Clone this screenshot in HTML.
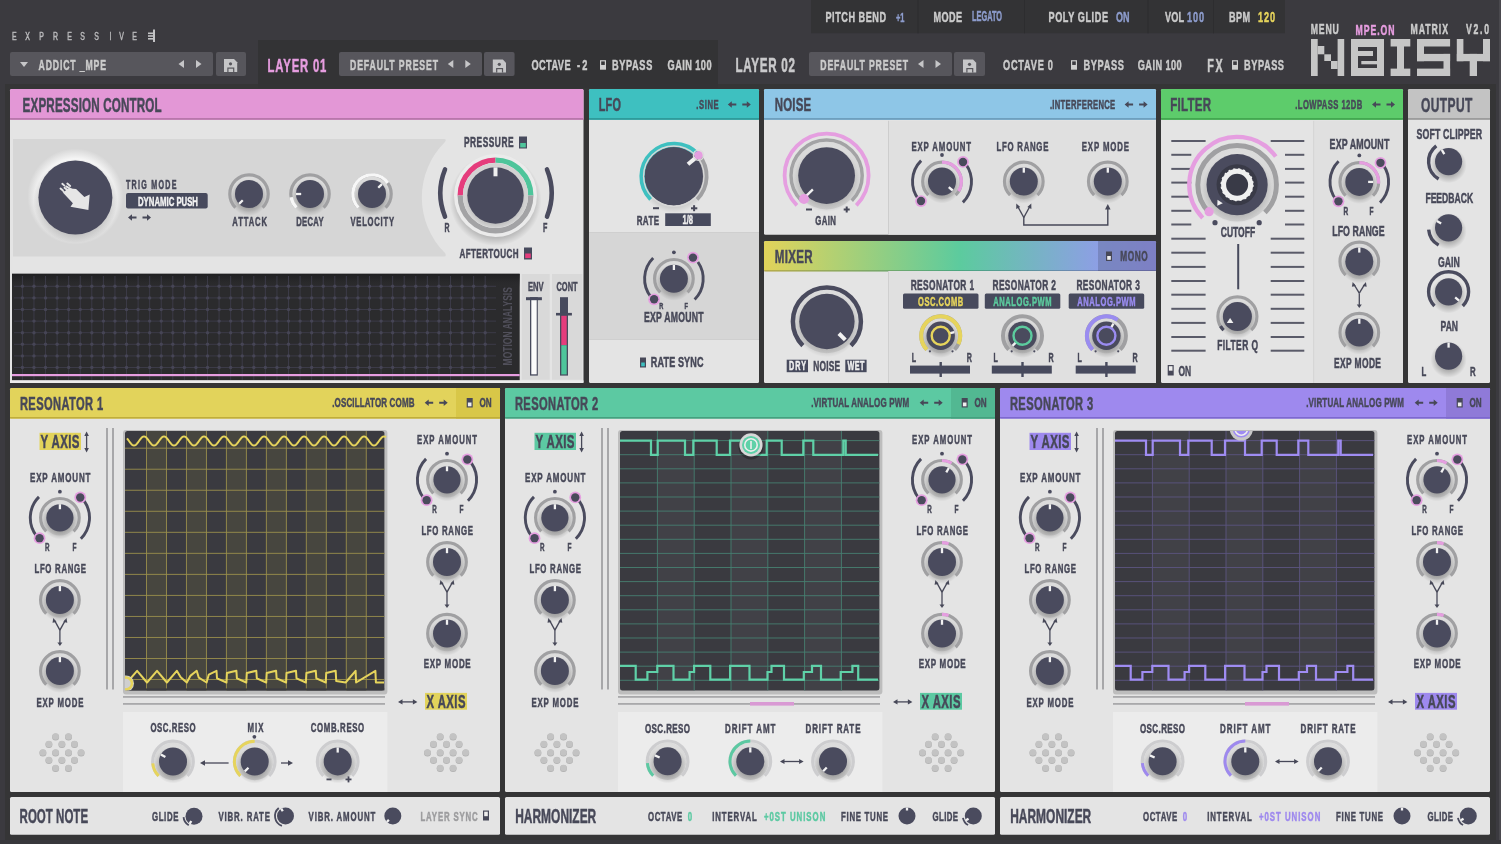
<!DOCTYPE html>
<html><head><meta charset="utf-8"><style>
html,body{margin:0;padding:0;background:#3a393e;width:1501px;height:844px;overflow:hidden}
svg{display:block;font-family:"Liberation Sans",sans-serif;will-change:transform}
</style></head><body>
<svg width="1501" height="844" viewBox="0 0 1501 844">
<defs>
<radialGradient id="ksh" cx="0.5" cy="0.5" r="0.5"><stop offset="0.55" stop-color="#000" stop-opacity="0.26"/><stop offset="1" stop-color="#000" stop-opacity="0"/></radialGradient>
<radialGradient id="halo" cx="0.5" cy="0.3" r="0.7"><stop offset="0" stop-color="#e2e2e2"/><stop offset="1" stop-color="#d2d2d2"/></radialGradient>
<radialGradient id="bigsh" cx="0.5" cy="0.5" r="0.5"><stop offset="0.75" stop-color="#000" stop-opacity="0.25"/><stop offset="1" stop-color="#000" stop-opacity="0"/></radialGradient>
<linearGradient id="mixg" x1="0" y1="0" x2="1" y2="0"><stop offset="0" stop-color="#e2d35a"/><stop offset="0.5" stop-color="#5ccb9e"/><stop offset="0.86" stop-color="#8e9ee6"/><stop offset="1" stop-color="#9a8cf0"/></linearGradient>
</defs>
<rect x="0.00" y="0.00" width="1501.00" height="844.00" rx="0" fill="#3b3a3f" />
<rect x="1499.00" y="0.00" width="2.00" height="844.00" rx="0" fill="#4a494e" />
<rect x="5.00" y="84.00" width="1491.00" height="756.00" rx="0" fill="#353536" />
<rect x="0.00" y="840.00" width="1501.00" height="4.00" rx="0" fill="#38373c" />
<text transform="translate(12.04,40.00) scale(0.6000,1)" font-size="11.59" font-weight="normal" fill="#b9b9bb" stroke="#b9b9bb" stroke-width="0.5" textLength="12.23" lengthAdjust="spacing">E</text>
<text transform="translate(25.34,40.00) scale(0.6000,1)" font-size="11.59" font-weight="normal" fill="#b9b9bb" stroke="#b9b9bb" stroke-width="0.5" textLength="12.23" lengthAdjust="spacing">X</text>
<text transform="translate(39.34,40.00) scale(0.6000,1)" font-size="11.59" font-weight="normal" fill="#b9b9bb" stroke="#b9b9bb" stroke-width="0.5" textLength="12.23" lengthAdjust="spacing">P</text>
<text transform="translate(53.03,40.00) scale(0.6000,1)" font-size="11.59" font-weight="normal" fill="#b9b9bb" stroke="#b9b9bb" stroke-width="0.5" textLength="13.24" lengthAdjust="spacing">R</text>
<text transform="translate(67.34,40.00) scale(0.6000,1)" font-size="11.59" font-weight="normal" fill="#b9b9bb" stroke="#b9b9bb" stroke-width="0.5" textLength="12.23" lengthAdjust="spacing">E</text>
<text transform="translate(80.34,40.00) scale(0.6000,1)" font-size="11.59" font-weight="normal" fill="#b9b9bb" stroke="#b9b9bb" stroke-width="0.5" textLength="12.23" lengthAdjust="spacing">S</text>
<text transform="translate(94.34,40.00) scale(0.6000,1)" font-size="11.59" font-weight="normal" fill="#b9b9bb" stroke="#b9b9bb" stroke-width="0.5" textLength="12.23" lengthAdjust="spacing">S</text>
<text transform="translate(109.46,40.00) scale(0.6000,1)" font-size="11.59" font-weight="normal" fill="#b9b9bb" stroke="#b9b9bb" stroke-width="0.5" textLength="5.11" lengthAdjust="spacing">I</text>
<text transform="translate(119.34,40.00) scale(0.6000,1)" font-size="11.59" font-weight="normal" fill="#b9b9bb" stroke="#b9b9bb" stroke-width="0.5" textLength="12.23" lengthAdjust="spacing">V</text>
<text transform="translate(132.34,40.00) scale(0.6000,1)" font-size="11.59" font-weight="normal" fill="#b9b9bb" stroke="#b9b9bb" stroke-width="0.5" textLength="12.23" lengthAdjust="spacing">E</text>
<rect x="148.00" y="32.50" width="6.00" height="1.60" rx="0" fill="#c4c4c6" />
<rect x="148.00" y="35.20" width="6.00" height="1.60" rx="0" fill="#c4c4c6" />
<rect x="148.00" y="38.00" width="6.00" height="1.60" rx="0" fill="#c4c4c6" />
<rect x="153.00" y="29.50" width="2.00" height="12.50" rx="0" fill="#c4c4c6" />
<rect x="10.00" y="52.00" width="203.00" height="24.00" rx="2" fill="#57565c" />
<path d="M20,62 L28,62 L24,67 Z" fill="#c6c6c8" stroke="none" stroke-width="1" />
<text transform="translate(38.50,70.00) scale(0.6000,1)" font-size="14.49" font-weight="bold" fill="#cbcbcb" stroke="#cbcbcb" stroke-width="0.5" textLength="112.48" lengthAdjust="spacing">ADDICT _MPE</text>
<path d="M178.5,64 L184.0,60 L184.0,68 Z" fill="#c6c6c8" stroke="none" stroke-width="1" />
<path d="M201.5,64 L196.0,60 L196.0,68 Z" fill="#c6c6c8" stroke="none" stroke-width="1" />
<rect x="216.00" y="52.00" width="30.00" height="24.00" rx="2" fill="#57565c" />
<path d="M224,59 h10 l3.2,3.2 v9.8 h-13.2 Z" fill="#c6c6c8" stroke="none" stroke-width="1" />
<circle cx="230.50" cy="63.80" r="1.60" fill="#57565c" />
<rect x="227.30" y="67.50" width="7.00" height="4.50" rx="0" fill="#57565c" />
<rect x="228.50" y="68.70" width="4.60" height="3.30" rx="0" fill="#c6c6c8" />
<rect x="258.00" y="40.00" width="460.00" height="48.00" rx="0" fill="#333335" />
<text transform="translate(267.60,72.00) scale(0.6000,1)" font-size="18.84" font-weight="bold" fill="#e79de0" stroke="#e79de0" stroke-width="0.5" textLength="97.96" lengthAdjust="spacing">LAYER 01</text>
<rect x="339.00" y="52.00" width="143.00" height="24.00" rx="2" fill="#57565c" />
<text transform="translate(350.00,70.00) scale(0.6000,1)" font-size="14.49" font-weight="bold" fill="#cbcbcb" stroke="#cbcbcb" stroke-width="0.5" textLength="146.68" lengthAdjust="spacing">DEFAULT PRESET</text>
<path d="M447.8,64 L453.3,60 L453.3,68 Z" fill="#c6c6c8" stroke="none" stroke-width="1" />
<path d="M470.8,64 L465.3,60 L465.3,68 Z" fill="#c6c6c8" stroke="none" stroke-width="1" />
<rect x="484.00" y="52.00" width="30.60" height="24.00" rx="2" fill="#57565c" />
<path d="M492.8,59.5 h10 l3.2,3.2 v9.8 h-13.2 Z" fill="#c6c6c8" stroke="none" stroke-width="1" />
<circle cx="499.30" cy="64.30" r="1.60" fill="#57565c" />
<rect x="496.10" y="68.00" width="7.00" height="4.50" rx="0" fill="#57565c" />
<rect x="497.30" y="69.20" width="4.60" height="3.30" rx="0" fill="#c6c6c8" />
<text transform="translate(531.40,70.20) scale(0.6000,1)" font-size="15.36" font-weight="bold" fill="#cbcbcb" stroke="#cbcbcb" stroke-width="0.5" textLength="65.31" lengthAdjust="spacing">OCTAVE</text>
<text transform="translate(577.00,70.20) scale(0.6000,1)" font-size="15.36" font-weight="bold" fill="#cbcbcb" stroke="#cbcbcb" stroke-width="0.5" textLength="17.32" lengthAdjust="spacing">-2</text>
<rect x="600.00" y="60.20" width="6.00" height="9.50" rx="0" fill="#cfcfcf" />
<rect x="601.20" y="61.40" width="3.60" height="3.55" rx="0" fill="#333335" />
<text transform="translate(612.00,70.20) scale(0.6000,1)" font-size="15.36" font-weight="bold" fill="#cbcbcb" stroke="#cbcbcb" stroke-width="0.5" textLength="67.14" lengthAdjust="spacing">BYPASS</text>
<text transform="translate(667.60,70.20) scale(0.6000,1)" font-size="15.36" font-weight="bold" fill="#cbcbcb" stroke="#cbcbcb" stroke-width="0.5" textLength="73.19" lengthAdjust="spacing">GAIN 100</text>
<text transform="translate(735.50,72.40) scale(0.6000,1)" font-size="19.42" font-weight="bold" fill="#c9c9cb" stroke="#c9c9cb" stroke-width="0.5" textLength="99.12" lengthAdjust="spacing">LAYER 02</text>
<rect x="809.00" y="52.00" width="143.00" height="24.00" rx="2" fill="#57565c" />
<text transform="translate(820.30,70.00) scale(0.6000,1)" font-size="14.49" font-weight="bold" fill="#cbcbcb" stroke="#cbcbcb" stroke-width="0.5" textLength="146.18" lengthAdjust="spacing">DEFAULT PRESET</text>
<path d="M918,64 L923.5,60 L923.5,68 Z" fill="#c6c6c8" stroke="none" stroke-width="1" />
<path d="M941,64 L935.5,60 L935.5,68 Z" fill="#c6c6c8" stroke="none" stroke-width="1" />
<rect x="954.00" y="52.00" width="31.00" height="24.00" rx="2" fill="#57565c" />
<path d="M963,59.5 h10 l3.2,3.2 v9.8 h-13.2 Z" fill="#c6c6c8" stroke="none" stroke-width="1" />
<circle cx="969.50" cy="64.30" r="1.60" fill="#57565c" />
<rect x="966.30" y="68.00" width="7.00" height="4.50" rx="0" fill="#57565c" />
<rect x="967.50" y="69.20" width="4.60" height="3.30" rx="0" fill="#c6c6c8" />
<text transform="translate(1003.00,70.20) scale(0.6000,1)" font-size="15.36" font-weight="bold" fill="#cbcbcb" stroke="#cbcbcb" stroke-width="0.5" textLength="83.30" lengthAdjust="spacing">OCTAVE 0</text>
<rect x="1071.00" y="60.20" width="6.00" height="9.50" rx="0" fill="#cfcfcf" />
<rect x="1072.20" y="61.40" width="3.60" height="3.55" rx="0" fill="#3b3a3f" />
<text transform="translate(1083.50,70.20) scale(0.6000,1)" font-size="15.36" font-weight="bold" fill="#cbcbcb" stroke="#cbcbcb" stroke-width="0.5" textLength="67.47" lengthAdjust="spacing">BYPASS</text>
<text transform="translate(1137.70,70.20) scale(0.6000,1)" font-size="15.36" font-weight="bold" fill="#cbcbcb" stroke="#cbcbcb" stroke-width="0.5" textLength="73.35" lengthAdjust="spacing">GAIN 100</text>
<text transform="translate(1207.30,71.70) scale(0.6000,1)" font-size="17.97" font-weight="bold" fill="#cbcbcb" stroke="#cbcbcb" stroke-width="0.5" textLength="25.63" lengthAdjust="spacing">FX</text>
<rect x="1232.00" y="60.20" width="6.00" height="9.50" rx="0" fill="#cfcfcf" />
<rect x="1233.20" y="61.40" width="3.60" height="3.55" rx="0" fill="#3b3a3f" />
<text transform="translate(1244.00,70.20) scale(0.6000,1)" font-size="15.36" font-weight="bold" fill="#cbcbcb" stroke="#cbcbcb" stroke-width="0.5" textLength="66.64" lengthAdjust="spacing">BYPASS</text>
<rect x="811.00" y="0.00" width="474.00" height="33.30" rx="0" fill="#333335" />
<rect x="917.50" y="0.00" width="1.00" height="33.30" rx="0" fill="#2d2d2f" />
<rect x="1024.00" y="0.00" width="1.00" height="33.30" rx="0" fill="#2d2d2f" />
<rect x="1147.50" y="0.00" width="1.00" height="33.30" rx="0" fill="#2d2d2f" />
<rect x="1213.00" y="0.00" width="1.00" height="33.30" rx="0" fill="#2d2d2f" />
<text transform="translate(825.50,22.00) scale(0.6000,1)" font-size="15.22" font-weight="bold" fill="#cbcbcb" stroke="#cbcbcb" stroke-width="0.5" textLength="100.86" lengthAdjust="spacing">PITCH BEND</text>
<text transform="translate(896.00,21.50) scale(0.5716,1)" font-size="13.04" font-weight="bold" fill="#8d9ccc" stroke="#8d9ccc" stroke-width="0.5" textLength="14.87" lengthAdjust="spacing">+1</text>
<text transform="translate(933.50,22.00) scale(0.6000,1)" font-size="15.22" font-weight="bold" fill="#cbcbcb" stroke="#cbcbcb" stroke-width="0.5" textLength="47.50" lengthAdjust="spacing">MODE</text>
<text transform="translate(972.00,20.70) scale(0.5347,1)" font-size="13.77" font-weight="bold" fill="#8d9ccc" stroke="#8d9ccc" stroke-width="0.5" textLength="56.10" lengthAdjust="spacing">LEGATO</text>
<text transform="translate(1048.50,22.00) scale(0.6000,1)" font-size="15.22" font-weight="bold" fill="#cbcbcb" stroke="#cbcbcb" stroke-width="0.5" textLength="99.19" lengthAdjust="spacing">POLY GLIDE</text>
<text transform="translate(1116.00,22.00) scale(0.5914,1)" font-size="15.22" font-weight="bold" fill="#8d9ccc" stroke="#8d9ccc" stroke-width="0.5" textLength="22.83" lengthAdjust="spacing">ON</text>
<text transform="translate(1165.00,22.00) scale(0.6000,1)" font-size="15.22" font-weight="bold" fill="#cbcbcb" stroke="#cbcbcb" stroke-width="0.5" textLength="31.68" lengthAdjust="spacing">VOL</text>
<text transform="translate(1187.00,22.00) scale(0.6000,1)" font-size="15.22" font-weight="bold" fill="#8d9ccc" stroke="#8d9ccc" stroke-width="0.5" textLength="28.31" lengthAdjust="spacing">100</text>
<text transform="translate(1229.00,22.00) scale(0.6000,1)" font-size="15.22" font-weight="bold" fill="#cbcbcb" stroke="#cbcbcb" stroke-width="0.5" textLength="35.03" lengthAdjust="spacing">BPM</text>
<text transform="translate(1258.00,22.00) scale(0.6000,1)" font-size="15.22" font-weight="bold" fill="#e6d45c" stroke="#e6d45c" stroke-width="0.5" textLength="28.31" lengthAdjust="spacing">120</text>
<text transform="translate(1310.70,34.00) scale(0.6000,1)" font-size="14.49" font-weight="bold" fill="#cbcbcb" stroke="#cbcbcb" stroke-width="0.5" textLength="46.83" lengthAdjust="spacing">MENU</text>
<text transform="translate(1355.60,34.50) scale(0.6000,1)" font-size="14.49" font-weight="bold" fill="#e79de0" stroke="#e79de0" stroke-width="0.5" textLength="65.00" lengthAdjust="spacing">MPE.ON</text>
<text transform="translate(1410.60,34.00) scale(0.6000,1)" font-size="14.49" font-weight="bold" fill="#cbcbcb" stroke="#cbcbcb" stroke-width="0.5" textLength="62.32" lengthAdjust="spacing">MATRIX</text>
<text transform="translate(1466.00,34.00) scale(0.6000,1)" font-size="14.49" font-weight="bold" fill="#cbcbcb" stroke="#cbcbcb" stroke-width="0.5" textLength="38.37" lengthAdjust="spacing">V2.0</text>
<rect x="1311.00" y="39.00" width="6.70" height="37.00" rx="0" fill="#c6c6c6" />
<rect x="1317.70" y="46.00" width="6.60" height="8.30" rx="0" fill="#c6c6c6" />
<rect x="1324.30" y="54.30" width="6.70" height="6.70" rx="0" fill="#c6c6c6" />
<rect x="1331.00" y="61.00" width="6.60" height="8.00" rx="0" fill="#c6c6c6" />
<rect x="1337.60" y="39.00" width="6.60" height="37.00" rx="0" fill="#c6c6c6" />
<rect x="1351.00" y="39.00" width="33.00" height="37.00" rx="0" fill="#c6c6c6" />
<rect x="1358.00" y="47.00" width="19.00" height="21.00" rx="0" fill="#3b3a3f" />
<rect x="1358.00" y="51.00" width="15.00" height="5.00" rx="0" fill="#c6c6c6" />
<rect x="1361.30" y="61.00" width="15.70" height="3.30" rx="0" fill="#c6c6c6" />
<rect x="1390.60" y="39.00" width="19.70" height="7.50" rx="0" fill="#c6c6c6" />
<rect x="1397.00" y="39.00" width="7.00" height="37.00" rx="0" fill="#c6c6c6" />
<rect x="1390.60" y="68.60" width="19.70" height="7.40" rx="0" fill="#c6c6c6" />
<rect x="1417.00" y="39.00" width="33.10" height="7.50" rx="0" fill="#c6c6c6" />
<rect x="1417.00" y="39.00" width="7.00" height="22.20" rx="0" fill="#c6c6c6" />
<rect x="1417.00" y="53.90" width="33.10" height="7.30" rx="0" fill="#c6c6c6" />
<rect x="1443.50" y="53.90" width="6.60" height="22.10" rx="0" fill="#c6c6c6" />
<rect x="1417.00" y="68.60" width="33.10" height="7.40" rx="0" fill="#c6c6c6" />
<rect x="1456.80" y="39.00" width="6.60" height="22.20" rx="0" fill="#c6c6c6" />
<rect x="1483.00" y="39.00" width="7.00" height="22.20" rx="0" fill="#c6c6c6" />
<rect x="1456.80" y="53.90" width="33.20" height="7.30" rx="0" fill="#c6c6c6" />
<rect x="1469.70" y="53.90" width="7.30" height="22.10" rx="0" fill="#c6c6c6" />
<rect x="10.00" y="89.00" width="573.50" height="294.00" rx="1.5" fill="#e4e4e4" />
<rect x="10.00" y="89.00" width="573.50" height="30.80" rx="1.5" fill="#e397d6" />
<rect x="10.00" y="118.00" width="573.50" height="1.80" rx="0" fill="#b877ab" />
<text transform="translate(22.60,111.50) scale(0.6000,1)" font-size="19.42" font-weight="bold" fill="#474858" stroke="#474858" stroke-width="0.5" textLength="231.81" lengthAdjust="spacing">EXPRESSION CONTROL</text>
<path d="M13,139 H444 Q447,139 445,142 A78,78 0 0 0 445,253 Q447,256.5 444,256.5 H13 Z" fill="#d6d6d6" stroke="none" stroke-width="1" />
<radialGradient id="bglow" cx="0.5" cy="0.5" r="0.5"><stop offset="0.78" stop-color="#f6f6f6"/><stop offset="1" stop-color="#f6f6f6" stop-opacity="0"/></radialGradient>
<circle cx="75.40" cy="196.50" r="48.00" fill="url(#bglow)" />
<circle cx="75.40" cy="201.00" r="42.00" fill="url(#bigsh)" />
<circle cx="75.40" cy="197.50" r="37.00" fill="#4a4b5e" />
<path d="M76.1,189.1 L84.4,196.9 L89.7,194.5 L88.4,209.9 L70.5,206.7 L72.9,203.3 L63.3,193.1 L66.5,189.5 L70.5,188.5 Z" fill="#e6e6e6" stroke="none" stroke-width="1" />
<line x1="62.30" y1="183.80" x2="64.40" y2="185.60" stroke="#e6e6e6" stroke-width="1.9" stroke-linecap="round"/>
<line x1="67.30" y1="183.60" x2="70.20" y2="186.00" stroke="#e6e6e6" stroke-width="1.9" stroke-linecap="round"/>
<line x1="66.20" y1="186.40" x2="75.00" y2="191.80" stroke="#e6e6e6" stroke-width="1.9" stroke-linecap="round"/>
<line x1="60.50" y1="188.60" x2="62.90" y2="190.50" stroke="#e6e6e6" stroke-width="1.9" stroke-linecap="round"/>
<line x1="63.60" y1="191.80" x2="66.50" y2="193.80" stroke="#e6e6e6" stroke-width="1.9" stroke-linecap="round"/>
<line x1="64.50" y1="187.80" x2="68.00" y2="190.60" stroke="#e6e6e6" stroke-width="1.9" stroke-linecap="round"/>
<text transform="translate(126.00,188.60) scale(0.6000,1)" font-size="11.88" font-weight="bold" fill="#474858" stroke="#474858" stroke-width="0.5" textLength="84.19" lengthAdjust="spacing">TRIG MODE</text>
<rect x="126.00" y="193.00" width="81.70" height="15.50" rx="2" fill="#474a5d" />
<text transform="translate(138.00,205.50) scale(0.5955,1)" font-size="13.04" font-weight="bold" fill="#f2f2f2" stroke="#f2f2f2" stroke-width="0.5" textLength="100.73" lengthAdjust="spacing">DYNAMIC PUSH</text>
<path d="M128,217.5 l4,-3.2 v2.2 h4.5 v2 h-4.5 v2.2 Z" fill="#474858" stroke="none" stroke-width="1" />
<path d="M151,217.5 l-4,-3.2 v2.2 h-4.5 v2 h4.5 v2.2 Z" fill="#474858" stroke="none" stroke-width="1" />
<circle cx="249.00" cy="194.00" r="17.60" fill="url(#halo)" />
<circle cx="249.00" cy="197.50" r="18.50" fill="url(#ksh)" />
<path d="M235.42,207.58 A19.2,19.2 0 1 1 262.58,207.58" fill="none" stroke="#a0a0a2" stroke-width="3.2" stroke-linecap="butt"/>
<circle cx="249.00" cy="194.00" r="14.00" fill="#4a4b5e" />
<line x1="239.10" y1="203.90" x2="242.76" y2="200.24" stroke="#f2f2f2" stroke-width="2.3" />
<circle cx="310.00" cy="194.00" r="17.60" fill="url(#halo)" />
<circle cx="310.00" cy="197.50" r="18.50" fill="url(#ksh)" />
<path d="M296.42,207.58 A19.2,19.2 0 1 1 323.58,207.58" fill="none" stroke="#a0a0a2" stroke-width="3.2" stroke-linecap="butt"/>
<path d="M296.42,207.58 A19.2,19.2 0 0 1 291.09,197.33" fill="none" stroke="#f7f7f7" stroke-width="3.3" stroke-linecap="butt"/>
<circle cx="310.00" cy="194.00" r="14.00" fill="#4a4b5e" />
<line x1="296.00" y1="194.00" x2="301.18" y2="194.00" stroke="#f2f2f2" stroke-width="2.3" />
<circle cx="372.00" cy="194.00" r="17.60" fill="url(#halo)" />
<circle cx="372.00" cy="197.50" r="18.50" fill="url(#ksh)" />
<path d="M358.42,207.58 A19.2,19.2 0 1 1 385.58,207.58" fill="none" stroke="#a0a0a2" stroke-width="3.2" stroke-linecap="butt"/>
<path d="M358.42,207.58 A19.2,19.2 0 1 1 387.73,182.99" fill="none" stroke="#f7f7f7" stroke-width="3.3" stroke-linecap="butt"/>
<circle cx="372.00" cy="194.00" r="14.00" fill="#4a4b5e" />
<line x1="381.90" y1="184.10" x2="378.24" y2="187.76" stroke="#f2f2f2" stroke-width="2.3" />
<text transform="translate(232.30,225.80) scale(0.6000,1)" font-size="12.75" font-weight="bold" fill="#474858" stroke="#474858" stroke-width="0.5" textLength="57.86" lengthAdjust="spacing">ATTACK</text>
<text transform="translate(296.30,225.80) scale(0.6000,1)" font-size="12.75" font-weight="bold" fill="#474858" stroke="#474858" stroke-width="0.5" textLength="45.32" lengthAdjust="spacing">DECAY</text>
<text transform="translate(350.50,225.80) scale(0.6000,1)" font-size="12.75" font-weight="bold" fill="#474858" stroke="#474858" stroke-width="0.5" textLength="72.51" lengthAdjust="spacing">VELOCITY</text>
<path d="M445,169.5 Q435.5,193 445,216.6" fill="none" stroke="#4a4b5e" stroke-width="4.6" stroke-linecap="round"/>
<path d="M547,169.5 Q556.5,193 547,216.6" fill="none" stroke="#4a4b5e" stroke-width="4.6" stroke-linecap="round"/>
<circle cx="495.50" cy="200.00" r="46.00" fill="url(#bigsh)" />
<circle cx="495.50" cy="195.50" r="41.50" fill="#ebebeb" />
<path d="M460.20,195.50 A35.3,35.3 0 0 1 495.50,160.20" fill="none" stroke="#e53c7c" stroke-width="5.3" stroke-linecap="butt"/>
<path d="M495.50,160.20 A35.3,35.3 0 0 1 530.80,195.50" fill="none" stroke="#4ec59b" stroke-width="5.3" stroke-linecap="butt"/>
<path d="M530.80,195.50 A35.3,35.3 0 0 1 460.20,195.50" fill="none" stroke="#a3a3a5" stroke-width="5.3" stroke-linecap="butt"/>
<circle cx="495.50" cy="195.50" r="32.60" fill="#d2d2d2" />
<circle cx="495.50" cy="198.00" r="30.00" fill="url(#ksh)" />
<circle cx="495.50" cy="195.50" r="28.20" fill="#4a4b5e" />
<rect x="493.50" y="167.30" width="4.00" height="9.00" rx="0" fill="#f0f0f0" />
<text transform="translate(444.50,232.20) scale(0.5843,1)" font-size="11.88" font-weight="bold" fill="#474858" stroke="#474858" stroke-width="0.5" textLength="8.58" lengthAdjust="spacing">R</text>
<text transform="translate(543.00,232.20) scale(0.6000,1)" font-size="11.88" font-weight="bold" fill="#474858" stroke="#474858" stroke-width="0.5" textLength="7.51" lengthAdjust="spacing">F</text>
<text transform="translate(464.00,147.20) scale(0.6000,1)" font-size="13.91" font-weight="bold" fill="#474858" stroke="#474858" stroke-width="0.5" textLength="82.52" lengthAdjust="spacing">PRESSURE</text>
<rect x="519.00" y="136.50" width="8.00" height="12.00" rx="0" fill="#474a5d" />
<rect x="520.20" y="143.00" width="5.60" height="4.40" rx="0" fill="#4ec59b" />
<text transform="translate(459.40,257.70) scale(0.6000,1)" font-size="13.48" font-weight="bold" fill="#474858" stroke="#474858" stroke-width="0.5" textLength="98.67" lengthAdjust="spacing">AFTERTOUCH</text>
<rect x="524.00" y="247.50" width="8.00" height="12.00" rx="0" fill="#474a5d" />
<rect x="525.20" y="253.50" width="5.60" height="4.60" rx="0" fill="#e53c7c" />
<rect x="12.00" y="273.80" width="507.70" height="106.60" rx="0" fill="#2b2b2d" />
<linearGradient id="mag" x1="0" y1="0" x2="0" y2="1"><stop offset="0" stop-color="#1f1f21"/><stop offset="1" stop-color="#2b2b2d" stop-opacity="0"/></linearGradient>
<rect x="12.00" y="273.80" width="507.70" height="14.00" rx="0" fill="url(#mag)" />
<line x1="22.40" y1="276.00" x2="22.40" y2="380.00" stroke="#3c3b48" stroke-width="1" />
<line x1="33.97" y1="276.00" x2="33.97" y2="380.00" stroke="#3c3b48" stroke-width="1" />
<line x1="45.54" y1="276.00" x2="45.54" y2="380.00" stroke="#3c3b48" stroke-width="1" />
<line x1="57.11" y1="276.00" x2="57.11" y2="380.00" stroke="#3c3b48" stroke-width="1" />
<line x1="68.68" y1="276.00" x2="68.68" y2="380.00" stroke="#3c3b48" stroke-width="1" />
<line x1="80.25" y1="276.00" x2="80.25" y2="380.00" stroke="#3c3b48" stroke-width="1" />
<line x1="91.82" y1="276.00" x2="91.82" y2="380.00" stroke="#3c3b48" stroke-width="1" />
<line x1="103.39" y1="276.00" x2="103.39" y2="380.00" stroke="#3c3b48" stroke-width="1" />
<line x1="114.96" y1="276.00" x2="114.96" y2="380.00" stroke="#3c3b48" stroke-width="1" />
<line x1="126.53" y1="276.00" x2="126.53" y2="380.00" stroke="#3c3b48" stroke-width="1" />
<line x1="138.10" y1="276.00" x2="138.10" y2="380.00" stroke="#3c3b48" stroke-width="1" />
<line x1="149.67" y1="276.00" x2="149.67" y2="380.00" stroke="#3c3b48" stroke-width="1" />
<line x1="161.24" y1="276.00" x2="161.24" y2="380.00" stroke="#3c3b48" stroke-width="1" />
<line x1="172.81" y1="276.00" x2="172.81" y2="380.00" stroke="#3c3b48" stroke-width="1" />
<line x1="184.38" y1="276.00" x2="184.38" y2="380.00" stroke="#3c3b48" stroke-width="1" />
<line x1="195.95" y1="276.00" x2="195.95" y2="380.00" stroke="#3c3b48" stroke-width="1" />
<line x1="207.52" y1="276.00" x2="207.52" y2="380.00" stroke="#3c3b48" stroke-width="1" />
<line x1="219.09" y1="276.00" x2="219.09" y2="380.00" stroke="#3c3b48" stroke-width="1" />
<line x1="230.66" y1="276.00" x2="230.66" y2="380.00" stroke="#3c3b48" stroke-width="1" />
<line x1="242.23" y1="276.00" x2="242.23" y2="380.00" stroke="#3c3b48" stroke-width="1" />
<line x1="253.80" y1="276.00" x2="253.80" y2="380.00" stroke="#3c3b48" stroke-width="1" />
<line x1="265.37" y1="276.00" x2="265.37" y2="380.00" stroke="#3c3b48" stroke-width="1" />
<line x1="276.94" y1="276.00" x2="276.94" y2="380.00" stroke="#3c3b48" stroke-width="1" />
<line x1="288.51" y1="276.00" x2="288.51" y2="380.00" stroke="#3c3b48" stroke-width="1" />
<line x1="300.08" y1="276.00" x2="300.08" y2="380.00" stroke="#3c3b48" stroke-width="1" />
<line x1="311.65" y1="276.00" x2="311.65" y2="380.00" stroke="#3c3b48" stroke-width="1" />
<line x1="323.22" y1="276.00" x2="323.22" y2="380.00" stroke="#3c3b48" stroke-width="1" />
<line x1="334.79" y1="276.00" x2="334.79" y2="380.00" stroke="#3c3b48" stroke-width="1" />
<line x1="346.36" y1="276.00" x2="346.36" y2="380.00" stroke="#3c3b48" stroke-width="1" />
<line x1="357.93" y1="276.00" x2="357.93" y2="380.00" stroke="#3c3b48" stroke-width="1" />
<line x1="369.50" y1="276.00" x2="369.50" y2="380.00" stroke="#3c3b48" stroke-width="1" />
<line x1="381.07" y1="276.00" x2="381.07" y2="380.00" stroke="#3c3b48" stroke-width="1" />
<line x1="392.64" y1="276.00" x2="392.64" y2="380.00" stroke="#3c3b48" stroke-width="1" />
<line x1="404.21" y1="276.00" x2="404.21" y2="380.00" stroke="#3c3b48" stroke-width="1" />
<line x1="415.78" y1="276.00" x2="415.78" y2="380.00" stroke="#3c3b48" stroke-width="1" />
<line x1="427.35" y1="276.00" x2="427.35" y2="380.00" stroke="#3c3b48" stroke-width="1" />
<line x1="438.92" y1="276.00" x2="438.92" y2="380.00" stroke="#3c3b48" stroke-width="1" />
<line x1="450.49" y1="276.00" x2="450.49" y2="380.00" stroke="#3c3b48" stroke-width="1" />
<line x1="462.06" y1="276.00" x2="462.06" y2="380.00" stroke="#3c3b48" stroke-width="1" />
<line x1="473.63" y1="276.00" x2="473.63" y2="380.00" stroke="#3c3b48" stroke-width="1" />
<line x1="485.20" y1="276.00" x2="485.20" y2="380.00" stroke="#3c3b48" stroke-width="1" />
<line x1="14.00" y1="286.30" x2="496.00" y2="286.30" stroke="#3c3b48" stroke-width="1" />
<circle cx="22.40" cy="286.30" r="1.70" fill="#464555" />
<circle cx="33.97" cy="286.30" r="1.70" fill="#464555" />
<circle cx="45.54" cy="286.30" r="1.70" fill="#464555" />
<circle cx="57.11" cy="286.30" r="1.70" fill="#464555" />
<circle cx="68.68" cy="286.30" r="1.70" fill="#464555" />
<circle cx="80.25" cy="286.30" r="1.70" fill="#464555" />
<circle cx="91.82" cy="286.30" r="1.70" fill="#464555" />
<circle cx="103.39" cy="286.30" r="1.70" fill="#464555" />
<circle cx="114.96" cy="286.30" r="1.70" fill="#464555" />
<circle cx="126.53" cy="286.30" r="1.70" fill="#464555" />
<circle cx="138.10" cy="286.30" r="1.70" fill="#464555" />
<circle cx="149.67" cy="286.30" r="1.70" fill="#464555" />
<circle cx="161.24" cy="286.30" r="1.70" fill="#464555" />
<circle cx="172.81" cy="286.30" r="1.70" fill="#464555" />
<circle cx="184.38" cy="286.30" r="1.70" fill="#464555" />
<circle cx="195.95" cy="286.30" r="1.70" fill="#464555" />
<circle cx="207.52" cy="286.30" r="1.70" fill="#464555" />
<circle cx="219.09" cy="286.30" r="1.70" fill="#464555" />
<circle cx="230.66" cy="286.30" r="1.70" fill="#464555" />
<circle cx="242.23" cy="286.30" r="1.70" fill="#464555" />
<circle cx="253.80" cy="286.30" r="1.70" fill="#464555" />
<circle cx="265.37" cy="286.30" r="1.70" fill="#464555" />
<circle cx="276.94" cy="286.30" r="1.70" fill="#464555" />
<circle cx="288.51" cy="286.30" r="1.70" fill="#464555" />
<circle cx="300.08" cy="286.30" r="1.70" fill="#464555" />
<circle cx="311.65" cy="286.30" r="1.70" fill="#464555" />
<circle cx="323.22" cy="286.30" r="1.70" fill="#464555" />
<circle cx="334.79" cy="286.30" r="1.70" fill="#464555" />
<circle cx="346.36" cy="286.30" r="1.70" fill="#464555" />
<circle cx="357.93" cy="286.30" r="1.70" fill="#464555" />
<circle cx="369.50" cy="286.30" r="1.70" fill="#464555" />
<circle cx="381.07" cy="286.30" r="1.70" fill="#464555" />
<circle cx="392.64" cy="286.30" r="1.70" fill="#464555" />
<circle cx="404.21" cy="286.30" r="1.70" fill="#464555" />
<circle cx="415.78" cy="286.30" r="1.70" fill="#464555" />
<circle cx="427.35" cy="286.30" r="1.70" fill="#464555" />
<circle cx="438.92" cy="286.30" r="1.70" fill="#464555" />
<circle cx="450.49" cy="286.30" r="1.70" fill="#464555" />
<circle cx="462.06" cy="286.30" r="1.70" fill="#464555" />
<circle cx="473.63" cy="286.30" r="1.70" fill="#464555" />
<circle cx="485.20" cy="286.30" r="1.70" fill="#464555" />
<line x1="14.00" y1="297.90" x2="496.00" y2="297.90" stroke="#3c3b48" stroke-width="1" />
<circle cx="22.40" cy="297.90" r="1.70" fill="#464555" />
<circle cx="33.97" cy="297.90" r="1.70" fill="#464555" />
<circle cx="45.54" cy="297.90" r="1.70" fill="#464555" />
<circle cx="57.11" cy="297.90" r="1.70" fill="#464555" />
<circle cx="68.68" cy="297.90" r="1.70" fill="#464555" />
<circle cx="80.25" cy="297.90" r="1.70" fill="#464555" />
<circle cx="91.82" cy="297.90" r="1.70" fill="#464555" />
<circle cx="103.39" cy="297.90" r="1.70" fill="#464555" />
<circle cx="114.96" cy="297.90" r="1.70" fill="#464555" />
<circle cx="126.53" cy="297.90" r="1.70" fill="#464555" />
<circle cx="138.10" cy="297.90" r="1.70" fill="#464555" />
<circle cx="149.67" cy="297.90" r="1.70" fill="#464555" />
<circle cx="161.24" cy="297.90" r="1.70" fill="#464555" />
<circle cx="172.81" cy="297.90" r="1.70" fill="#464555" />
<circle cx="184.38" cy="297.90" r="1.70" fill="#464555" />
<circle cx="195.95" cy="297.90" r="1.70" fill="#464555" />
<circle cx="207.52" cy="297.90" r="1.70" fill="#464555" />
<circle cx="219.09" cy="297.90" r="1.70" fill="#464555" />
<circle cx="230.66" cy="297.90" r="1.70" fill="#464555" />
<circle cx="242.23" cy="297.90" r="1.70" fill="#464555" />
<circle cx="253.80" cy="297.90" r="1.70" fill="#464555" />
<circle cx="265.37" cy="297.90" r="1.70" fill="#464555" />
<circle cx="276.94" cy="297.90" r="1.70" fill="#464555" />
<circle cx="288.51" cy="297.90" r="1.70" fill="#464555" />
<circle cx="300.08" cy="297.90" r="1.70" fill="#464555" />
<circle cx="311.65" cy="297.90" r="1.70" fill="#464555" />
<circle cx="323.22" cy="297.90" r="1.70" fill="#464555" />
<circle cx="334.79" cy="297.90" r="1.70" fill="#464555" />
<circle cx="346.36" cy="297.90" r="1.70" fill="#464555" />
<circle cx="357.93" cy="297.90" r="1.70" fill="#464555" />
<circle cx="369.50" cy="297.90" r="1.70" fill="#464555" />
<circle cx="381.07" cy="297.90" r="1.70" fill="#464555" />
<circle cx="392.64" cy="297.90" r="1.70" fill="#464555" />
<circle cx="404.21" cy="297.90" r="1.70" fill="#464555" />
<circle cx="415.78" cy="297.90" r="1.70" fill="#464555" />
<circle cx="427.35" cy="297.90" r="1.70" fill="#464555" />
<circle cx="438.92" cy="297.90" r="1.70" fill="#464555" />
<circle cx="450.49" cy="297.90" r="1.70" fill="#464555" />
<circle cx="462.06" cy="297.90" r="1.70" fill="#464555" />
<circle cx="473.63" cy="297.90" r="1.70" fill="#464555" />
<circle cx="485.20" cy="297.90" r="1.70" fill="#464555" />
<line x1="14.00" y1="309.50" x2="496.00" y2="309.50" stroke="#3c3b48" stroke-width="1" />
<circle cx="22.40" cy="309.50" r="1.70" fill="#464555" />
<circle cx="33.97" cy="309.50" r="1.70" fill="#464555" />
<circle cx="45.54" cy="309.50" r="1.70" fill="#464555" />
<circle cx="57.11" cy="309.50" r="1.70" fill="#464555" />
<circle cx="68.68" cy="309.50" r="1.70" fill="#464555" />
<circle cx="80.25" cy="309.50" r="1.70" fill="#464555" />
<circle cx="91.82" cy="309.50" r="1.70" fill="#464555" />
<circle cx="103.39" cy="309.50" r="1.70" fill="#464555" />
<circle cx="114.96" cy="309.50" r="1.70" fill="#464555" />
<circle cx="126.53" cy="309.50" r="1.70" fill="#464555" />
<circle cx="138.10" cy="309.50" r="1.70" fill="#464555" />
<circle cx="149.67" cy="309.50" r="1.70" fill="#464555" />
<circle cx="161.24" cy="309.50" r="1.70" fill="#464555" />
<circle cx="172.81" cy="309.50" r="1.70" fill="#464555" />
<circle cx="184.38" cy="309.50" r="1.70" fill="#464555" />
<circle cx="195.95" cy="309.50" r="1.70" fill="#464555" />
<circle cx="207.52" cy="309.50" r="1.70" fill="#464555" />
<circle cx="219.09" cy="309.50" r="1.70" fill="#464555" />
<circle cx="230.66" cy="309.50" r="1.70" fill="#464555" />
<circle cx="242.23" cy="309.50" r="1.70" fill="#464555" />
<circle cx="253.80" cy="309.50" r="1.70" fill="#464555" />
<circle cx="265.37" cy="309.50" r="1.70" fill="#464555" />
<circle cx="276.94" cy="309.50" r="1.70" fill="#464555" />
<circle cx="288.51" cy="309.50" r="1.70" fill="#464555" />
<circle cx="300.08" cy="309.50" r="1.70" fill="#464555" />
<circle cx="311.65" cy="309.50" r="1.70" fill="#464555" />
<circle cx="323.22" cy="309.50" r="1.70" fill="#464555" />
<circle cx="334.79" cy="309.50" r="1.70" fill="#464555" />
<circle cx="346.36" cy="309.50" r="1.70" fill="#464555" />
<circle cx="357.93" cy="309.50" r="1.70" fill="#464555" />
<circle cx="369.50" cy="309.50" r="1.70" fill="#464555" />
<circle cx="381.07" cy="309.50" r="1.70" fill="#464555" />
<circle cx="392.64" cy="309.50" r="1.70" fill="#464555" />
<circle cx="404.21" cy="309.50" r="1.70" fill="#464555" />
<circle cx="415.78" cy="309.50" r="1.70" fill="#464555" />
<circle cx="427.35" cy="309.50" r="1.70" fill="#464555" />
<circle cx="438.92" cy="309.50" r="1.70" fill="#464555" />
<circle cx="450.49" cy="309.50" r="1.70" fill="#464555" />
<circle cx="462.06" cy="309.50" r="1.70" fill="#464555" />
<circle cx="473.63" cy="309.50" r="1.70" fill="#464555" />
<circle cx="485.20" cy="309.50" r="1.70" fill="#464555" />
<line x1="14.00" y1="321.10" x2="496.00" y2="321.10" stroke="#3c3b48" stroke-width="1" />
<circle cx="22.40" cy="321.10" r="1.70" fill="#464555" />
<circle cx="33.97" cy="321.10" r="1.70" fill="#464555" />
<circle cx="45.54" cy="321.10" r="1.70" fill="#464555" />
<circle cx="57.11" cy="321.10" r="1.70" fill="#464555" />
<circle cx="68.68" cy="321.10" r="1.70" fill="#464555" />
<circle cx="80.25" cy="321.10" r="1.70" fill="#464555" />
<circle cx="91.82" cy="321.10" r="1.70" fill="#464555" />
<circle cx="103.39" cy="321.10" r="1.70" fill="#464555" />
<circle cx="114.96" cy="321.10" r="1.70" fill="#464555" />
<circle cx="126.53" cy="321.10" r="1.70" fill="#464555" />
<circle cx="138.10" cy="321.10" r="1.70" fill="#464555" />
<circle cx="149.67" cy="321.10" r="1.70" fill="#464555" />
<circle cx="161.24" cy="321.10" r="1.70" fill="#464555" />
<circle cx="172.81" cy="321.10" r="1.70" fill="#464555" />
<circle cx="184.38" cy="321.10" r="1.70" fill="#464555" />
<circle cx="195.95" cy="321.10" r="1.70" fill="#464555" />
<circle cx="207.52" cy="321.10" r="1.70" fill="#464555" />
<circle cx="219.09" cy="321.10" r="1.70" fill="#464555" />
<circle cx="230.66" cy="321.10" r="1.70" fill="#464555" />
<circle cx="242.23" cy="321.10" r="1.70" fill="#464555" />
<circle cx="253.80" cy="321.10" r="1.70" fill="#464555" />
<circle cx="265.37" cy="321.10" r="1.70" fill="#464555" />
<circle cx="276.94" cy="321.10" r="1.70" fill="#464555" />
<circle cx="288.51" cy="321.10" r="1.70" fill="#464555" />
<circle cx="300.08" cy="321.10" r="1.70" fill="#464555" />
<circle cx="311.65" cy="321.10" r="1.70" fill="#464555" />
<circle cx="323.22" cy="321.10" r="1.70" fill="#464555" />
<circle cx="334.79" cy="321.10" r="1.70" fill="#464555" />
<circle cx="346.36" cy="321.10" r="1.70" fill="#464555" />
<circle cx="357.93" cy="321.10" r="1.70" fill="#464555" />
<circle cx="369.50" cy="321.10" r="1.70" fill="#464555" />
<circle cx="381.07" cy="321.10" r="1.70" fill="#464555" />
<circle cx="392.64" cy="321.10" r="1.70" fill="#464555" />
<circle cx="404.21" cy="321.10" r="1.70" fill="#464555" />
<circle cx="415.78" cy="321.10" r="1.70" fill="#464555" />
<circle cx="427.35" cy="321.10" r="1.70" fill="#464555" />
<circle cx="438.92" cy="321.10" r="1.70" fill="#464555" />
<circle cx="450.49" cy="321.10" r="1.70" fill="#464555" />
<circle cx="462.06" cy="321.10" r="1.70" fill="#464555" />
<circle cx="473.63" cy="321.10" r="1.70" fill="#464555" />
<circle cx="485.20" cy="321.10" r="1.70" fill="#464555" />
<line x1="14.00" y1="332.70" x2="496.00" y2="332.70" stroke="#3c3b48" stroke-width="1" />
<circle cx="22.40" cy="332.70" r="1.70" fill="#464555" />
<circle cx="33.97" cy="332.70" r="1.70" fill="#464555" />
<circle cx="45.54" cy="332.70" r="1.70" fill="#464555" />
<circle cx="57.11" cy="332.70" r="1.70" fill="#464555" />
<circle cx="68.68" cy="332.70" r="1.70" fill="#464555" />
<circle cx="80.25" cy="332.70" r="1.70" fill="#464555" />
<circle cx="91.82" cy="332.70" r="1.70" fill="#464555" />
<circle cx="103.39" cy="332.70" r="1.70" fill="#464555" />
<circle cx="114.96" cy="332.70" r="1.70" fill="#464555" />
<circle cx="126.53" cy="332.70" r="1.70" fill="#464555" />
<circle cx="138.10" cy="332.70" r="1.70" fill="#464555" />
<circle cx="149.67" cy="332.70" r="1.70" fill="#464555" />
<circle cx="161.24" cy="332.70" r="1.70" fill="#464555" />
<circle cx="172.81" cy="332.70" r="1.70" fill="#464555" />
<circle cx="184.38" cy="332.70" r="1.70" fill="#464555" />
<circle cx="195.95" cy="332.70" r="1.70" fill="#464555" />
<circle cx="207.52" cy="332.70" r="1.70" fill="#464555" />
<circle cx="219.09" cy="332.70" r="1.70" fill="#464555" />
<circle cx="230.66" cy="332.70" r="1.70" fill="#464555" />
<circle cx="242.23" cy="332.70" r="1.70" fill="#464555" />
<circle cx="253.80" cy="332.70" r="1.70" fill="#464555" />
<circle cx="265.37" cy="332.70" r="1.70" fill="#464555" />
<circle cx="276.94" cy="332.70" r="1.70" fill="#464555" />
<circle cx="288.51" cy="332.70" r="1.70" fill="#464555" />
<circle cx="300.08" cy="332.70" r="1.70" fill="#464555" />
<circle cx="311.65" cy="332.70" r="1.70" fill="#464555" />
<circle cx="323.22" cy="332.70" r="1.70" fill="#464555" />
<circle cx="334.79" cy="332.70" r="1.70" fill="#464555" />
<circle cx="346.36" cy="332.70" r="1.70" fill="#464555" />
<circle cx="357.93" cy="332.70" r="1.70" fill="#464555" />
<circle cx="369.50" cy="332.70" r="1.70" fill="#464555" />
<circle cx="381.07" cy="332.70" r="1.70" fill="#464555" />
<circle cx="392.64" cy="332.70" r="1.70" fill="#464555" />
<circle cx="404.21" cy="332.70" r="1.70" fill="#464555" />
<circle cx="415.78" cy="332.70" r="1.70" fill="#464555" />
<circle cx="427.35" cy="332.70" r="1.70" fill="#464555" />
<circle cx="438.92" cy="332.70" r="1.70" fill="#464555" />
<circle cx="450.49" cy="332.70" r="1.70" fill="#464555" />
<circle cx="462.06" cy="332.70" r="1.70" fill="#464555" />
<circle cx="473.63" cy="332.70" r="1.70" fill="#464555" />
<circle cx="485.20" cy="332.70" r="1.70" fill="#464555" />
<line x1="14.00" y1="344.30" x2="496.00" y2="344.30" stroke="#3c3b48" stroke-width="1" />
<circle cx="22.40" cy="344.30" r="1.70" fill="#464555" />
<circle cx="33.97" cy="344.30" r="1.70" fill="#464555" />
<circle cx="45.54" cy="344.30" r="1.70" fill="#464555" />
<circle cx="57.11" cy="344.30" r="1.70" fill="#464555" />
<circle cx="68.68" cy="344.30" r="1.70" fill="#464555" />
<circle cx="80.25" cy="344.30" r="1.70" fill="#464555" />
<circle cx="91.82" cy="344.30" r="1.70" fill="#464555" />
<circle cx="103.39" cy="344.30" r="1.70" fill="#464555" />
<circle cx="114.96" cy="344.30" r="1.70" fill="#464555" />
<circle cx="126.53" cy="344.30" r="1.70" fill="#464555" />
<circle cx="138.10" cy="344.30" r="1.70" fill="#464555" />
<circle cx="149.67" cy="344.30" r="1.70" fill="#464555" />
<circle cx="161.24" cy="344.30" r="1.70" fill="#464555" />
<circle cx="172.81" cy="344.30" r="1.70" fill="#464555" />
<circle cx="184.38" cy="344.30" r="1.70" fill="#464555" />
<circle cx="195.95" cy="344.30" r="1.70" fill="#464555" />
<circle cx="207.52" cy="344.30" r="1.70" fill="#464555" />
<circle cx="219.09" cy="344.30" r="1.70" fill="#464555" />
<circle cx="230.66" cy="344.30" r="1.70" fill="#464555" />
<circle cx="242.23" cy="344.30" r="1.70" fill="#464555" />
<circle cx="253.80" cy="344.30" r="1.70" fill="#464555" />
<circle cx="265.37" cy="344.30" r="1.70" fill="#464555" />
<circle cx="276.94" cy="344.30" r="1.70" fill="#464555" />
<circle cx="288.51" cy="344.30" r="1.70" fill="#464555" />
<circle cx="300.08" cy="344.30" r="1.70" fill="#464555" />
<circle cx="311.65" cy="344.30" r="1.70" fill="#464555" />
<circle cx="323.22" cy="344.30" r="1.70" fill="#464555" />
<circle cx="334.79" cy="344.30" r="1.70" fill="#464555" />
<circle cx="346.36" cy="344.30" r="1.70" fill="#464555" />
<circle cx="357.93" cy="344.30" r="1.70" fill="#464555" />
<circle cx="369.50" cy="344.30" r="1.70" fill="#464555" />
<circle cx="381.07" cy="344.30" r="1.70" fill="#464555" />
<circle cx="392.64" cy="344.30" r="1.70" fill="#464555" />
<circle cx="404.21" cy="344.30" r="1.70" fill="#464555" />
<circle cx="415.78" cy="344.30" r="1.70" fill="#464555" />
<circle cx="427.35" cy="344.30" r="1.70" fill="#464555" />
<circle cx="438.92" cy="344.30" r="1.70" fill="#464555" />
<circle cx="450.49" cy="344.30" r="1.70" fill="#464555" />
<circle cx="462.06" cy="344.30" r="1.70" fill="#464555" />
<circle cx="473.63" cy="344.30" r="1.70" fill="#464555" />
<circle cx="485.20" cy="344.30" r="1.70" fill="#464555" />
<line x1="14.00" y1="355.90" x2="496.00" y2="355.90" stroke="#3c3b48" stroke-width="1" />
<circle cx="22.40" cy="355.90" r="1.70" fill="#464555" />
<circle cx="33.97" cy="355.90" r="1.70" fill="#464555" />
<circle cx="45.54" cy="355.90" r="1.70" fill="#464555" />
<circle cx="57.11" cy="355.90" r="1.70" fill="#464555" />
<circle cx="68.68" cy="355.90" r="1.70" fill="#464555" />
<circle cx="80.25" cy="355.90" r="1.70" fill="#464555" />
<circle cx="91.82" cy="355.90" r="1.70" fill="#464555" />
<circle cx="103.39" cy="355.90" r="1.70" fill="#464555" />
<circle cx="114.96" cy="355.90" r="1.70" fill="#464555" />
<circle cx="126.53" cy="355.90" r="1.70" fill="#464555" />
<circle cx="138.10" cy="355.90" r="1.70" fill="#464555" />
<circle cx="149.67" cy="355.90" r="1.70" fill="#464555" />
<circle cx="161.24" cy="355.90" r="1.70" fill="#464555" />
<circle cx="172.81" cy="355.90" r="1.70" fill="#464555" />
<circle cx="184.38" cy="355.90" r="1.70" fill="#464555" />
<circle cx="195.95" cy="355.90" r="1.70" fill="#464555" />
<circle cx="207.52" cy="355.90" r="1.70" fill="#464555" />
<circle cx="219.09" cy="355.90" r="1.70" fill="#464555" />
<circle cx="230.66" cy="355.90" r="1.70" fill="#464555" />
<circle cx="242.23" cy="355.90" r="1.70" fill="#464555" />
<circle cx="253.80" cy="355.90" r="1.70" fill="#464555" />
<circle cx="265.37" cy="355.90" r="1.70" fill="#464555" />
<circle cx="276.94" cy="355.90" r="1.70" fill="#464555" />
<circle cx="288.51" cy="355.90" r="1.70" fill="#464555" />
<circle cx="300.08" cy="355.90" r="1.70" fill="#464555" />
<circle cx="311.65" cy="355.90" r="1.70" fill="#464555" />
<circle cx="323.22" cy="355.90" r="1.70" fill="#464555" />
<circle cx="334.79" cy="355.90" r="1.70" fill="#464555" />
<circle cx="346.36" cy="355.90" r="1.70" fill="#464555" />
<circle cx="357.93" cy="355.90" r="1.70" fill="#464555" />
<circle cx="369.50" cy="355.90" r="1.70" fill="#464555" />
<circle cx="381.07" cy="355.90" r="1.70" fill="#464555" />
<circle cx="392.64" cy="355.90" r="1.70" fill="#464555" />
<circle cx="404.21" cy="355.90" r="1.70" fill="#464555" />
<circle cx="415.78" cy="355.90" r="1.70" fill="#464555" />
<circle cx="427.35" cy="355.90" r="1.70" fill="#464555" />
<circle cx="438.92" cy="355.90" r="1.70" fill="#464555" />
<circle cx="450.49" cy="355.90" r="1.70" fill="#464555" />
<circle cx="462.06" cy="355.90" r="1.70" fill="#464555" />
<circle cx="473.63" cy="355.90" r="1.70" fill="#464555" />
<circle cx="485.20" cy="355.90" r="1.70" fill="#464555" />
<line x1="14.00" y1="367.50" x2="496.00" y2="367.50" stroke="#3c3b48" stroke-width="1" />
<circle cx="22.40" cy="367.50" r="1.70" fill="#464555" />
<circle cx="33.97" cy="367.50" r="1.70" fill="#464555" />
<circle cx="45.54" cy="367.50" r="1.70" fill="#464555" />
<circle cx="57.11" cy="367.50" r="1.70" fill="#464555" />
<circle cx="68.68" cy="367.50" r="1.70" fill="#464555" />
<circle cx="80.25" cy="367.50" r="1.70" fill="#464555" />
<circle cx="91.82" cy="367.50" r="1.70" fill="#464555" />
<circle cx="103.39" cy="367.50" r="1.70" fill="#464555" />
<circle cx="114.96" cy="367.50" r="1.70" fill="#464555" />
<circle cx="126.53" cy="367.50" r="1.70" fill="#464555" />
<circle cx="138.10" cy="367.50" r="1.70" fill="#464555" />
<circle cx="149.67" cy="367.50" r="1.70" fill="#464555" />
<circle cx="161.24" cy="367.50" r="1.70" fill="#464555" />
<circle cx="172.81" cy="367.50" r="1.70" fill="#464555" />
<circle cx="184.38" cy="367.50" r="1.70" fill="#464555" />
<circle cx="195.95" cy="367.50" r="1.70" fill="#464555" />
<circle cx="207.52" cy="367.50" r="1.70" fill="#464555" />
<circle cx="219.09" cy="367.50" r="1.70" fill="#464555" />
<circle cx="230.66" cy="367.50" r="1.70" fill="#464555" />
<circle cx="242.23" cy="367.50" r="1.70" fill="#464555" />
<circle cx="253.80" cy="367.50" r="1.70" fill="#464555" />
<circle cx="265.37" cy="367.50" r="1.70" fill="#464555" />
<circle cx="276.94" cy="367.50" r="1.70" fill="#464555" />
<circle cx="288.51" cy="367.50" r="1.70" fill="#464555" />
<circle cx="300.08" cy="367.50" r="1.70" fill="#464555" />
<circle cx="311.65" cy="367.50" r="1.70" fill="#464555" />
<circle cx="323.22" cy="367.50" r="1.70" fill="#464555" />
<circle cx="334.79" cy="367.50" r="1.70" fill="#464555" />
<circle cx="346.36" cy="367.50" r="1.70" fill="#464555" />
<circle cx="357.93" cy="367.50" r="1.70" fill="#464555" />
<circle cx="369.50" cy="367.50" r="1.70" fill="#464555" />
<circle cx="381.07" cy="367.50" r="1.70" fill="#464555" />
<circle cx="392.64" cy="367.50" r="1.70" fill="#464555" />
<circle cx="404.21" cy="367.50" r="1.70" fill="#464555" />
<circle cx="415.78" cy="367.50" r="1.70" fill="#464555" />
<circle cx="427.35" cy="367.50" r="1.70" fill="#464555" />
<circle cx="438.92" cy="367.50" r="1.70" fill="#464555" />
<circle cx="450.49" cy="367.50" r="1.70" fill="#464555" />
<circle cx="462.06" cy="367.50" r="1.70" fill="#464555" />
<circle cx="473.63" cy="367.50" r="1.70" fill="#464555" />
<circle cx="485.20" cy="367.50" r="1.70" fill="#464555" />
<rect x="12.00" y="374.00" width="507.70" height="2.20" rx="0" fill="#e79de0" />
<g transform="translate(512.2,365.4) rotate(-90)"><text x="0" y="0" font-size="12.75" font-weight="bold" fill="#51505b" transform="scale(0.66,1)" textLength="118.5" lengthAdjust="spacing">MOTION ANALYSIS</text></g>
<rect x="521.70" y="274.00" width="28.00" height="105.70" rx="0" fill="#d9d9d9" />
<rect x="552.00" y="274.00" width="30.40" height="105.70" rx="0" fill="#d9d9d9" />
<text transform="translate(527.90,291.10) scale(0.5952,1)" font-size="12.75" font-weight="bold" fill="#474858" stroke="#474858" stroke-width="0.5" textLength="26.22" lengthAdjust="spacing">ENV</text>
<text transform="translate(556.50,291.10) scale(0.5836,1)" font-size="12.75" font-weight="bold" fill="#474858" stroke="#474858" stroke-width="0.5" textLength="36.13" lengthAdjust="spacing">CONT</text>
<rect x="530.00" y="297.20" width="7.80" height="78.40" rx="0" fill="#474a5d" />
<rect x="531.30" y="299.50" width="5.40" height="74.80" rx="0" fill="#fbfbfb" />
<rect x="526.00" y="297.20" width="15.90" height="3.00" rx="0" fill="#474a5d" />
<rect x="560.00" y="297.20" width="8.00" height="78.40" rx="0" fill="#474a5d" />
<rect x="561.30" y="315.60" width="5.40" height="29.40" rx="0" fill="#e53c7c" />
<rect x="561.30" y="345.20" width="5.40" height="29.20" rx="0" fill="#4ec59b" />
<rect x="556.00" y="312.90" width="15.90" height="2.60" rx="0" fill="#474a5d" />
<rect x="10.00" y="380.40" width="573.50" height="2.60" rx="0" fill="#ececec" />
<rect x="589.00" y="89.00" width="170.00" height="294.00" rx="1.5" fill="#e4e4e4" />
<rect x="589.00" y="89.00" width="170.00" height="30.80" rx="1.5" fill="#3ec0c0" />
<rect x="589.00" y="118.00" width="170.00" height="1.80" rx="0" fill="#2e9b9b" />
<text transform="translate(598.70,111.20) scale(0.6000,1)" font-size="18.12" font-weight="bold" fill="#474858" stroke="#474858" stroke-width="0.5" textLength="37.16" lengthAdjust="spacing">LFO</text>
<text transform="translate(696.30,108.90) scale(0.6000,1)" font-size="12.75" font-weight="bold" fill="#474858" stroke="#474858" stroke-width="0.5" textLength="37.36" lengthAdjust="spacing">.SINE</text>
<path d="M727.8,104.5 l4,-3.2 v2.2 h4.5 v2 h-4.5 v2.2 Z" fill="#474858" stroke="none" stroke-width="1" />
<path d="M750.8,104.5 l-4,-3.2 v2.2 h-4.5 v2 h4.5 v2.2 Z" fill="#474858" stroke="none" stroke-width="1" />
<rect x="589.00" y="232.50" width="170.00" height="106.50" rx="0" fill="#d6d6d6" />
<rect x="589.00" y="232.00" width="170.00" height="1.00" rx="0" fill="#cfcfcf" />
<rect x="589.00" y="339.00" width="170.00" height="1.00" rx="0" fill="#cfcfcf" />
<circle cx="673.80" cy="176.20" r="28.85" fill="url(#halo)" />
<circle cx="673.80" cy="179.70" r="33.50" fill="url(#ksh)" />
<path d="M698.16,155.76 A31.8,31.8 0 0 1 696.29,198.69" fill="none" stroke="#a0a0a2" stroke-width="5.9" stroke-linecap="butt"/>
<path d="M651.31,198.69 A31.8,31.8 0 1 1 697.06,154.51" fill="none" stroke="#3ec0c0" stroke-width="5.9" stroke-linecap="butt"/>
<circle cx="673.80" cy="176.20" r="29.00" fill="#4a4b5e" />
<circle cx="673.80" cy="176.20" r="30.20" fill="none" stroke="#d8d8d8" stroke-width="1.4"/>
<circle cx="673.80" cy="176.20" r="29.00" fill="#4a4b5e" />
<line x1="695.63" y1="157.88" x2="687.97" y2="164.31" stroke="#f0f0f0" stroke-width="4" />
<circle cx="698.50" cy="155.20" r="4.20" fill="#e59ee0" />
<circle cx="698.50" cy="155.20" r="5.20" fill="none" stroke="#dcdcdc" stroke-width="1.2"/>
<rect x="653.00" y="207.20" width="6.00" height="2.00" rx="0" fill="#474858" />
<rect x="691.00" y="207.30" width="6.30" height="2.00" rx="0" fill="#474858" />
<rect x="693.10" y="205.20" width="2.00" height="6.00" rx="0" fill="#474858" />
<text transform="translate(636.70,225.00) scale(0.6000,1)" font-size="13.33" font-weight="bold" fill="#474858" stroke="#474858" stroke-width="0.5" textLength="37.14" lengthAdjust="spacing">RATE</text>
<rect x="665.20" y="213.30" width="45.60" height="12.70" rx="0" fill="#474a5d" />
<text transform="translate(682.50,224.30) scale(0.5791,1)" font-size="13.04" font-weight="bold" fill="#efefef" stroke="#efefef" stroke-width="0.5" textLength="18.13" lengthAdjust="spacing">1/8</text>
<path d="M650.81,296.84 A29.3,29.3 0 0 1 653.18,258.08" fill="none" stroke="#4a4b5e" stroke-width="2.9" stroke-linecap="butt"/>
<path d="M697.90,261.99 A29.3,29.3 0 0 1 694.62,299.52" fill="none" stroke="#4a4b5e" stroke-width="2.9" stroke-linecap="butt"/>
<circle cx="673.90" cy="278.80" r="17.70" fill="url(#halo)" />
<circle cx="673.90" cy="282.30" r="18.50" fill="url(#ksh)" />
<path d="M660.25,292.45 A19.3,19.3 0 1 1 687.55,292.45" fill="none" stroke="#a0a0a2" stroke-width="3.2" stroke-linecap="butt"/>
<circle cx="673.90" cy="278.80" r="14.00" fill="#4a4b5e" />
<line x1="673.90" y1="264.80" x2="673.90" y2="269.98" stroke="#f2f2f2" stroke-width="2.3" />
<circle cx="692.97" cy="257.62" r="5.90" fill="#e59ee0" />
<circle cx="692.97" cy="257.62" r="4.20" fill="#4a4b5c" />
<circle cx="654.10" cy="299.30" r="5.90" fill="#e59ee0" />
<circle cx="654.10" cy="299.30" r="4.20" fill="#4a4b5c" />
<circle cx="673.90" cy="252.30" r="1.90" fill="#4a4b5e" />
<text transform="translate(659.30,309.10) scale(0.6000,1)" font-size="9.42" font-weight="bold" fill="#474858" stroke="#474858" stroke-width="0.5" textLength="8.85" lengthAdjust="spacing">R</text>
<text transform="translate(684.50,309.10) scale(0.6000,1)" font-size="9.42" font-weight="bold" fill="#474858" stroke="#474858" stroke-width="0.5" textLength="8.34" lengthAdjust="spacing">F</text>
<text transform="translate(643.90,322.20) scale(0.6000,1)" font-size="14.49" font-weight="bold" fill="#474858" stroke="#474858" stroke-width="0.5" textLength="99.36" lengthAdjust="spacing">EXP AMOUNT</text>
<rect x="640.00" y="357.50" width="6.00" height="10.00" rx="0" fill="#474858" />
<rect x="641.20" y="362.50" width="3.60" height="3.80" rx="0" fill="#3ec0c0" />
<text transform="translate(650.80,367.40) scale(0.6000,1)" font-size="15.07" font-weight="bold" fill="#474858" stroke="#474858" stroke-width="0.5" textLength="87.82" lengthAdjust="spacing">RATE SYNC</text>
<rect x="764.00" y="89.00" width="392.00" height="145.70" rx="1.5" fill="#e4e4e4" />
<rect x="764.00" y="89.00" width="392.00" height="30.80" rx="1.5" fill="#8ec6e7" />
<rect x="764.00" y="118.00" width="392.00" height="1.80" rx="0" fill="#6e9fbe" />
<text transform="translate(774.70,111.00) scale(0.6000,1)" font-size="19.13" font-weight="bold" fill="#474858" stroke="#474858" stroke-width="0.5" textLength="60.87" lengthAdjust="spacing">NOISE</text>
<text transform="translate(1049.90,109.00) scale(0.6000,1)" font-size="12.75" font-weight="bold" fill="#474858" stroke="#474858" stroke-width="0.5" textLength="108.85" lengthAdjust="spacing">.INTERFERENCE</text>
<path d="M1124.6,104.5 l4,-3.2 v2.2 h4.5 v2 h-4.5 v2.2 Z" fill="#474858" stroke="none" stroke-width="1" />
<path d="M1147.6,104.5 l-4,-3.2 v2.2 h-4.5 v2 h4.5 v2.2 Z" fill="#474858" stroke="none" stroke-width="1" />
<rect x="888.00" y="120.80" width="1.00" height="113.90" rx="0" fill="#cdcdcd" />
<rect x="889.00" y="120.80" width="267.00" height="113.90" rx="0" fill="#e0e0e0" />
<circle cx="826.60" cy="175.60" r="33.85" fill="url(#halo)" />
<circle cx="826.60" cy="179.10" r="32.90" fill="url(#ksh)" />
<path d="M801.43,200.77 A35.6,35.6 0 1 1 851.77,200.77" fill="none" stroke="#a3a3a5" stroke-width="3.5" stroke-linecap="butt"/>
<path d="M796.90,205.30 A42,42 0 1 1 856.30,205.30" fill="none" stroke="#e59ee0" stroke-width="3.8" stroke-linecap="butt"/>
<circle cx="826.60" cy="175.60" r="28.40" fill="#4a4b5e" />
<line x1="806.52" y1="195.68" x2="812.88" y2="189.32" stroke="#f2f2f2" stroke-width="2.3" />
<circle cx="804.00" cy="199.00" r="5.00" fill="#e59ee0" />
<circle cx="804.00" cy="199.00" r="3.50" fill="#e59ee0" />
<rect x="806.00" y="208.50" width="6.00" height="2.00" rx="0" fill="#474858" />
<rect x="843.70" y="208.50" width="6.00" height="2.00" rx="0" fill="#474858" />
<rect x="845.70" y="206.50" width="2.00" height="6.00" rx="0" fill="#474858" />
<text transform="translate(815.20,225.10) scale(0.6000,1)" font-size="13.04" font-weight="bold" fill="#474858" stroke="#474858" stroke-width="0.5" textLength="34.67" lengthAdjust="spacing">GAIN</text>
<text transform="translate(911.40,150.50) scale(0.6000,1)" font-size="13.04" font-weight="bold" fill="#474858" stroke="#474858" stroke-width="0.5" textLength="99.36" lengthAdjust="spacing">EXP AMOUNT</text>
<path d="M918.75,199.66 A29.5,29.5 0 0 1 921.14,160.64" fill="none" stroke="#4a4b5e" stroke-width="2.9" stroke-linecap="butt"/>
<path d="M966.16,164.58 A29.5,29.5 0 0 1 962.86,202.36" fill="none" stroke="#4a4b5e" stroke-width="2.9" stroke-linecap="butt"/>
<circle cx="942.00" cy="181.50" r="17.70" fill="url(#halo)" />
<circle cx="942.00" cy="185.00" r="18.50" fill="url(#ksh)" />
<path d="M928.35,195.15 A19.3,19.3 0 1 1 955.65,195.15" fill="none" stroke="#a0a0a2" stroke-width="3.2" stroke-linecap="butt"/>
<path d="M942.00,162.20 A19.3,19.3 0 0 1 958.71,191.15" fill="none" stroke="#e59ee0" stroke-width="3.2" stroke-linecap="butt"/>
<circle cx="942.00" cy="181.50" r="14.00" fill="#4a4b5e" />
<line x1="952.72" y1="190.50" x2="948.76" y2="187.17" stroke="#f2f2f2" stroke-width="2.3" />
<circle cx="962.99" cy="161.93" r="5.90" fill="#e59ee0" />
<circle cx="962.99" cy="161.93" r="4.20" fill="#4a4b5c" />
<circle cx="921.01" cy="201.07" r="5.90" fill="#e59ee0" />
<circle cx="921.01" cy="201.07" r="4.20" fill="#4a4b5c" />
<circle cx="942.00" cy="155.00" r="1.90" fill="#4a4b5e" />
<text transform="translate(996.60,150.50) scale(0.6000,1)" font-size="13.04" font-weight="bold" fill="#474858" stroke="#474858" stroke-width="0.5" textLength="86.32" lengthAdjust="spacing">LFO RANGE</text>
<circle cx="1023.80" cy="181.50" r="17.70" fill="url(#halo)" />
<circle cx="1023.80" cy="185.00" r="18.50" fill="url(#ksh)" />
<path d="M1010.15,195.15 A19.3,19.3 0 1 1 1037.45,195.15" fill="none" stroke="#a0a0a2" stroke-width="3.2" stroke-linecap="butt"/>
<circle cx="1023.80" cy="181.50" r="14.00" fill="#4a4b5e" />
<line x1="1023.80" y1="167.50" x2="1023.80" y2="172.68" stroke="#f2f2f2" stroke-width="2.3" />
<text transform="translate(1081.70,150.50) scale(0.6000,1)" font-size="13.04" font-weight="bold" fill="#474858" stroke="#474858" stroke-width="0.5" textLength="78.85" lengthAdjust="spacing">EXP MODE</text>
<circle cx="1107.80" cy="181.50" r="17.70" fill="url(#halo)" />
<circle cx="1107.80" cy="185.00" r="18.50" fill="url(#ksh)" />
<path d="M1094.15,195.15 A19.3,19.3 0 1 1 1121.45,195.15" fill="none" stroke="#a0a0a2" stroke-width="3.2" stroke-linecap="butt"/>
<circle cx="1107.80" cy="181.50" r="14.00" fill="#4a4b5e" />
<line x1="1107.80" y1="167.50" x2="1107.80" y2="172.68" stroke="#f2f2f2" stroke-width="2.3" />
<line x1="1017.50" y1="206.00" x2="1023.80" y2="217.50" stroke="#474858" stroke-width="1.4" />
<line x1="1030.10" y1="206.00" x2="1023.80" y2="217.50" stroke="#474858" stroke-width="1.4" />
<path d="M1016.3,203.5 L1016.2,209 L1020.2,207 Z" fill="#474858" stroke="none" stroke-width="1" />
<path d="M1031.3,203.5 L1031.4,209 L1027.4,207 Z" fill="#474858" stroke="none" stroke-width="1" />
<path d="M1023.8,217 V225 H1107.8 V209" fill="none" stroke="#474858" stroke-width="1.4" />
<path d="M1105,209.5 L1110.6,209.5 L1107.8,204 Z" fill="#474858" stroke="none" stroke-width="1" />
<rect x="764.00" y="241.00" width="392.00" height="142.00" rx="1.5" fill="#e4e4e4" />
<rect x="764.00" y="241.00" width="392.00" height="30.60" rx="1.5" fill="url(#mixg)" />
<rect x="1098.00" y="241.00" width="58.00" height="30.60" rx="0" fill="#6a78a8" fill-opacity="0.6"/>
<rect x="764.00" y="270.00" width="392.00" height="1.60" rx="0" fill="#000" fill-opacity="0.18"/>
<text transform="translate(774.70,263.00) scale(0.6000,1)" font-size="19.28" font-weight="bold" fill="#474858" stroke="#474858" stroke-width="0.5" textLength="63.04" lengthAdjust="spacing">MIXER</text>
<rect x="1106.00" y="251.50" width="6.00" height="9.50" rx="0" fill="#474858" />
<rect x="1107.20" y="256.00" width="3.60" height="3.80" rx="0" fill="#eeeeee" />
<text transform="translate(1120.30,261.00) scale(0.6000,1)" font-size="13.77" font-weight="bold" fill="#474858" stroke="#474858" stroke-width="0.5" textLength="45.68" lengthAdjust="spacing">MONO</text>
<rect x="888.00" y="271.00" width="1.00" height="112.00" rx="0" fill="#cfcfcf" />
<rect x="889.00" y="271.00" width="267.00" height="112.00" rx="0" fill="#e0e0e0" />
<circle cx="826.90" cy="321.50" r="31.75" fill="url(#halo)" />
<circle cx="826.90" cy="325.00" r="32.20" fill="url(#ksh)" />
<path d="M802.86,345.54 A34,34 0 1 1 850.94,345.54" fill="none" stroke="#4a4b5e" stroke-width="4.5" stroke-linecap="butt"/>
<circle cx="826.90" cy="321.50" r="27.70" fill="#4a4b5e" />
<line x1="845.28" y1="339.88" x2="838.92" y2="333.52" stroke="#f2f2f2" stroke-width="4" />
<rect x="786.70" y="359.70" width="21.30" height="12.50" rx="0" fill="#474a5d" />
<text transform="translate(789.00,370.30) scale(0.6000,1)" font-size="12.03" font-weight="bold" fill="#f0f0f0" stroke="#f0f0f0" stroke-width="0.5" textLength="28.32" lengthAdjust="spacing">DRY</text>
<text transform="translate(813.30,370.80) scale(0.6000,1)" font-size="13.91" font-weight="bold" fill="#474858" stroke="#474858" stroke-width="0.5" textLength="44.53" lengthAdjust="spacing">NOISE</text>
<rect x="845.30" y="359.70" width="21.30" height="12.50" rx="0" fill="#474a5d" />
<text transform="translate(847.50,370.30) scale(0.6000,1)" font-size="12.03" font-weight="bold" fill="#f0f0f0" stroke="#f0f0f0" stroke-width="0.5" textLength="28.35" lengthAdjust="spacing">WET</text>
<text transform="translate(910.70,290.40) scale(0.6000,1)" font-size="13.91" font-weight="bold" fill="#474858" stroke="#474858" stroke-width="0.5" textLength="105.68" lengthAdjust="spacing">RESONATOR 1</text>
<rect x="903.00" y="293.60" width="75.50" height="15.20" rx="1.5" fill="#474a5d" />
<text transform="translate(918.00,305.70) scale(0.6000,1)" font-size="12.61" font-weight="bold" fill="#e6d45c" stroke="#e6d45c" stroke-width="0.5" textLength="75.33" lengthAdjust="spacing">OSC.COMB</text>
<circle cx="940.70" cy="335.80" r="17.50" fill="url(#halo)" />
<circle cx="940.70" cy="339.30" r="18.70" fill="url(#ksh)" />
<path d="M926.91,349.59 A19.5,19.5 0 1 1 954.49,349.59" fill="none" stroke="#a0a0a2" stroke-width="4" stroke-linecap="butt"/>
<path d="M926.91,349.59 A19.5,19.5 0 1 1 958.37,344.04" fill="none" stroke="#e6d45c" stroke-width="4" stroke-linecap="butt"/>
<circle cx="940.70" cy="335.80" r="14.20" fill="#4a4b5e" />
<line x1="954.42" y1="332.12" x2="949.34" y2="333.48" stroke="#f2f2f2" stroke-width="2.3" />
<circle cx="940.70" cy="335.80" r="9.00" fill="none" stroke="#e6d45c" stroke-width="2.4"/>
<circle cx="929.90" cy="351.30" r="1.10" fill="#4a4b5e" />
<circle cx="952.50" cy="351.30" r="1.10" fill="#4a4b5e" />
<text transform="translate(911.70,361.80) scale(0.6000,1)" font-size="11.88" font-weight="bold" fill="#474858" stroke="#474858" stroke-width="0.5" textLength="9.18" lengthAdjust="spacing">L</text>
<text transform="translate(966.70,361.80) scale(0.6000,1)" font-size="11.88" font-weight="bold" fill="#474858" stroke="#474858" stroke-width="0.5" textLength="9.19" lengthAdjust="spacing">R</text>
<rect x="910.00" y="365.60" width="60.00" height="8.00" rx="0" fill="#474a5d" />
<rect x="939.50" y="362.00" width="2.40" height="15.00" rx="0" fill="#474a5d" />
<text transform="translate(992.50,290.40) scale(0.6000,1)" font-size="13.91" font-weight="bold" fill="#474858" stroke="#474858" stroke-width="0.5" textLength="105.68" lengthAdjust="spacing">RESONATOR 2</text>
<rect x="984.80" y="293.60" width="75.50" height="15.20" rx="1.5" fill="#474a5d" />
<text transform="translate(993.30,305.70) scale(0.6000,1)" font-size="12.61" font-weight="bold" fill="#5ccb9e" stroke="#5ccb9e" stroke-width="0.5" textLength="97.00" lengthAdjust="spacing">ANALOG.PWM</text>
<circle cx="1022.50" cy="335.80" r="17.50" fill="url(#halo)" />
<circle cx="1022.50" cy="339.30" r="18.70" fill="url(#ksh)" />
<path d="M1008.71,349.59 A19.5,19.5 0 1 1 1036.29,349.59" fill="none" stroke="#a0a0a2" stroke-width="4" stroke-linecap="butt"/>
<circle cx="1022.50" cy="335.80" r="14.20" fill="#4a4b5e" />
<line x1="1012.46" y1="345.84" x2="1016.17" y2="342.13" stroke="#f2f2f2" stroke-width="2.3" />
<circle cx="1022.50" cy="335.80" r="9.00" fill="none" stroke="#5ccb9e" stroke-width="2.4"/>
<circle cx="1011.70" cy="351.30" r="1.10" fill="#4a4b5e" />
<circle cx="1034.30" cy="351.30" r="1.10" fill="#4a4b5e" />
<text transform="translate(993.50,361.80) scale(0.6000,1)" font-size="11.88" font-weight="bold" fill="#474858" stroke="#474858" stroke-width="0.5" textLength="9.18" lengthAdjust="spacing">L</text>
<text transform="translate(1048.50,361.80) scale(0.6000,1)" font-size="11.88" font-weight="bold" fill="#474858" stroke="#474858" stroke-width="0.5" textLength="9.19" lengthAdjust="spacing">R</text>
<rect x="991.80" y="365.60" width="60.00" height="8.00" rx="0" fill="#474a5d" />
<rect x="1021.30" y="362.00" width="2.40" height="15.00" rx="0" fill="#474a5d" />
<text transform="translate(1076.40,290.40) scale(0.6000,1)" font-size="13.91" font-weight="bold" fill="#474858" stroke="#474858" stroke-width="0.5" textLength="105.68" lengthAdjust="spacing">RESONATOR 3</text>
<rect x="1068.70" y="293.60" width="75.50" height="15.20" rx="1.5" fill="#474a5d" />
<text transform="translate(1077.30,305.70) scale(0.6000,1)" font-size="12.61" font-weight="bold" fill="#9a8cf0" stroke="#9a8cf0" stroke-width="0.5" textLength="97.00" lengthAdjust="spacing">ANALOG.PWM</text>
<circle cx="1106.40" cy="335.80" r="17.50" fill="url(#halo)" />
<circle cx="1106.40" cy="339.30" r="18.70" fill="url(#ksh)" />
<path d="M1092.61,349.59 A19.5,19.5 0 1 1 1120.19,349.59" fill="none" stroke="#a0a0a2" stroke-width="4" stroke-linecap="butt"/>
<path d="M1092.61,349.59 A19.5,19.5 0 0 1 1117.58,319.83" fill="none" stroke="#9a8cf0" stroke-width="4" stroke-linecap="butt"/>
<circle cx="1106.40" cy="335.80" r="14.20" fill="#4a4b5e" />
<line x1="1113.50" y1="323.50" x2="1110.87" y2="328.05" stroke="#f2f2f2" stroke-width="2.3" />
<circle cx="1106.40" cy="335.80" r="9.00" fill="none" stroke="#9a8cf0" stroke-width="2.4"/>
<circle cx="1095.60" cy="351.30" r="1.10" fill="#4a4b5e" />
<circle cx="1118.20" cy="351.30" r="1.10" fill="#4a4b5e" />
<text transform="translate(1077.40,361.80) scale(0.6000,1)" font-size="11.88" font-weight="bold" fill="#474858" stroke="#474858" stroke-width="0.5" textLength="9.18" lengthAdjust="spacing">L</text>
<text transform="translate(1132.40,361.80) scale(0.6000,1)" font-size="11.88" font-weight="bold" fill="#474858" stroke="#474858" stroke-width="0.5" textLength="9.19" lengthAdjust="spacing">R</text>
<rect x="1075.70" y="365.60" width="60.00" height="8.00" rx="0" fill="#474a5d" />
<rect x="1105.20" y="362.00" width="2.40" height="15.00" rx="0" fill="#474a5d" />
<rect x="1161.00" y="89.00" width="242.00" height="294.00" rx="1.5" fill="#e4e4e4" />
<rect x="1161.00" y="89.00" width="242.00" height="30.80" rx="1.5" fill="#5dcc6b" />
<rect x="1161.00" y="118.00" width="242.00" height="1.80" rx="0" fill="#43a850" />
<text transform="translate(1170.20,111.00) scale(0.6000,1)" font-size="19.28" font-weight="bold" fill="#474858" stroke="#474858" stroke-width="0.5" textLength="68.01" lengthAdjust="spacing">FILTER</text>
<text transform="translate(1295.30,109.00) scale(0.6000,1)" font-size="12.75" font-weight="bold" fill="#474858" stroke="#474858" stroke-width="0.5" textLength="111.49" lengthAdjust="spacing">.LOWPASS 12DB</text>
<path d="M1372,104.5 l4,-3.2 v2.2 h4.5 v2 h-4.5 v2.2 Z" fill="#474858" stroke="none" stroke-width="1" />
<path d="M1395,104.5 l-4,-3.2 v2.2 h-4.5 v2 h4.5 v2.2 Z" fill="#474858" stroke="none" stroke-width="1" />
<rect x="1313.40" y="120.80" width="1.00" height="262.20" rx="0" fill="#cdcdcd" />
<rect x="1314.40" y="120.80" width="88.60" height="262.20" rx="0" fill="#e0e0e0" />
<rect x="1171.30" y="140.00" width="34.30" height="2.00" rx="0" fill="#5a5b69" />
<rect x="1270.70" y="140.00" width="33.60" height="2.00" rx="0" fill="#5a5b69" />
<rect x="1171.30" y="153.80" width="20.00" height="2.00" rx="0" fill="#5a5b69" />
<rect x="1285.00" y="153.80" width="19.30" height="2.00" rx="0" fill="#5a5b69" />
<rect x="1171.30" y="167.90" width="20.00" height="2.00" rx="0" fill="#5a5b69" />
<rect x="1285.00" y="167.90" width="19.30" height="2.00" rx="0" fill="#5a5b69" />
<rect x="1171.30" y="181.60" width="20.00" height="2.00" rx="0" fill="#5a5b69" />
<rect x="1285.00" y="181.60" width="19.30" height="2.00" rx="0" fill="#5a5b69" />
<rect x="1171.30" y="195.70" width="20.00" height="2.00" rx="0" fill="#5a5b69" />
<rect x="1285.00" y="195.70" width="19.30" height="2.00" rx="0" fill="#5a5b69" />
<rect x="1171.30" y="209.80" width="20.00" height="2.00" rx="0" fill="#5a5b69" />
<rect x="1285.00" y="209.80" width="19.30" height="2.00" rx="0" fill="#5a5b69" />
<rect x="1171.30" y="223.50" width="20.00" height="2.00" rx="0" fill="#5a5b69" />
<rect x="1285.00" y="223.50" width="19.30" height="2.00" rx="0" fill="#5a5b69" />
<rect x="1171.30" y="237.70" width="34.30" height="2.00" rx="0" fill="#5a5b69" />
<rect x="1270.70" y="237.70" width="33.60" height="2.00" rx="0" fill="#5a5b69" />
<rect x="1171.30" y="251.70" width="34.30" height="2.00" rx="0" fill="#5a5b69" />
<rect x="1270.70" y="251.70" width="33.60" height="2.00" rx="0" fill="#5a5b69" />
<rect x="1171.30" y="265.90" width="34.30" height="2.00" rx="0" fill="#5a5b69" />
<rect x="1270.70" y="265.90" width="33.60" height="2.00" rx="0" fill="#5a5b69" />
<rect x="1171.30" y="280.00" width="34.30" height="2.00" rx="0" fill="#5a5b69" />
<rect x="1270.70" y="280.00" width="33.60" height="2.00" rx="0" fill="#5a5b69" />
<rect x="1171.30" y="293.70" width="34.30" height="2.00" rx="0" fill="#5a5b69" />
<rect x="1270.70" y="293.70" width="33.60" height="2.00" rx="0" fill="#5a5b69" />
<rect x="1171.30" y="307.80" width="34.30" height="2.00" rx="0" fill="#5a5b69" />
<rect x="1270.70" y="307.80" width="33.60" height="2.00" rx="0" fill="#5a5b69" />
<rect x="1171.30" y="321.90" width="34.30" height="2.00" rx="0" fill="#5a5b69" />
<rect x="1270.70" y="321.90" width="33.60" height="2.00" rx="0" fill="#5a5b69" />
<rect x="1171.30" y="336.00" width="34.30" height="2.00" rx="0" fill="#5a5b69" />
<rect x="1270.70" y="336.00" width="33.60" height="2.00" rx="0" fill="#5a5b69" />
<rect x="1171.30" y="349.70" width="34.30" height="2.00" rx="0" fill="#5a5b69" />
<rect x="1270.70" y="349.70" width="33.60" height="2.00" rx="0" fill="#5a5b69" />
<circle cx="1237.10" cy="184.70" r="36.80" fill="url(#halo)" />
<circle cx="1237.10" cy="188.20" r="35.10" fill="url(#ksh)" />
<path d="M1209.31,212.49 A39.3,39.3 0 1 1 1264.89,212.49" fill="none" stroke="#a0a0a2" stroke-width="5" stroke-linecap="butt"/>
<path d="M1202.72,217.90 A47.8,47.8 0 1 1 1275.77,156.60" fill="none" stroke="#e59ee0" stroke-width="4.3" stroke-linecap="butt"/>
<circle cx="1237.10" cy="184.70" r="30.60" fill="#4a4b5e" />
<circle cx="1209.10" cy="211.70" r="4.60" fill="#e59ee0" />
<circle cx="1237.10" cy="184.70" r="20.50" fill="#393a47" />
<circle cx="1237.10" cy="184.70" r="13.50" fill="none" stroke="#f0f0f0" stroke-width="5"/>
<circle cx="1237.10" cy="184.70" r="15.80" fill="none" stroke="#f0f0f0" stroke-width="1.6" stroke-dasharray="2.2 2.8"/>
<path d="M1217.5,199.8 L1222.8,203.2 L1217.3,205.8 Z" fill="#f0f0f0" stroke="none" stroke-width="1" />
<circle cx="1215.00" cy="222.70" r="2.60" fill="#4a4b5e" />
<circle cx="1259.20" cy="222.70" r="2.60" fill="#4a4b5e" />
<text transform="translate(1220.80,236.70) scale(0.5865,1)" font-size="14.49" font-weight="bold" fill="#474858" stroke="#474858" stroke-width="0.5" textLength="58.50" lengthAdjust="spacing">CUTOFF</text>
<rect x="1237.20" y="244.00" width="2.00" height="45.30" rx="0" fill="#474a5d" />
<circle cx="1237.40" cy="316.40" r="17.90" fill="url(#halo)" />
<circle cx="1237.40" cy="319.90" r="19.00" fill="url(#ksh)" />
<path d="M1223.61,330.19 A19.5,19.5 0 1 1 1251.19,330.19" fill="none" stroke="#a0a0a2" stroke-width="3.2" stroke-linecap="butt"/>
<path d="M1223.61,330.19 A19.5,19.5 0 0 1 1220.51,326.15" fill="none" stroke="#4a4b5e" stroke-width="3.2" stroke-linecap="butt"/>
<circle cx="1237.40" cy="316.40" r="14.50" fill="#4a4b5e" />
<path d="M1226.8,323 L1233.4,323 L1230.1,318 Z" fill="#f0f0f0" stroke="none" stroke-width="1" />
<text transform="translate(1217.20,349.60) scale(0.6000,1)" font-size="14.06" font-weight="bold" fill="#474858" stroke="#474858" stroke-width="0.5" textLength="68.01" lengthAdjust="spacing">FILTER Q</text>
<rect x="1167.70" y="365.00" width="6.00" height="10.50" rx="0" fill="#474858" />
<rect x="1168.90" y="366.20" width="3.60" height="4.50" rx="0" fill="#eeeeee" />
<text transform="translate(1178.50,375.50) scale(0.5842,1)" font-size="14.49" font-weight="bold" fill="#474858" stroke="#474858" stroke-width="0.5" textLength="21.74" lengthAdjust="spacing">ON</text>
<text transform="translate(1329.60,149.40) scale(0.6000,1)" font-size="14.78" font-weight="bold" fill="#474858" stroke="#474858" stroke-width="0.5" textLength="99.53" lengthAdjust="spacing">EXP AMOUNT</text>
<path d="M1336.21,199.94 A29.3,29.3 0 0 1 1338.58,161.18" fill="none" stroke="#4a4b5e" stroke-width="2.9" stroke-linecap="butt"/>
<path d="M1383.30,165.09 A29.3,29.3 0 0 1 1380.02,202.62" fill="none" stroke="#4a4b5e" stroke-width="2.9" stroke-linecap="butt"/>
<circle cx="1359.30" cy="181.90" r="17.70" fill="url(#halo)" />
<circle cx="1359.30" cy="185.40" r="18.50" fill="url(#ksh)" />
<path d="M1345.65,195.55 A19.3,19.3 0 1 1 1372.95,195.55" fill="none" stroke="#a0a0a2" stroke-width="3.2" stroke-linecap="butt"/>
<path d="M1359.30,162.60 A19.3,19.3 0 0 1 1378.53,183.58" fill="none" stroke="#e59ee0" stroke-width="3.2" stroke-linecap="butt"/>
<circle cx="1359.30" cy="181.90" r="14.00" fill="#4a4b5e" />
<line x1="1373.30" y1="181.90" x2="1368.12" y2="181.90" stroke="#f2f2f2" stroke-width="2.3" />
<circle cx="1380.48" cy="162.83" r="5.90" fill="#e59ee0" />
<circle cx="1380.48" cy="162.83" r="4.20" fill="#4a4b5c" />
<circle cx="1338.46" cy="201.34" r="5.90" fill="#e59ee0" />
<circle cx="1338.46" cy="201.34" r="4.20" fill="#4a4b5c" />
<circle cx="1359.30" cy="155.40" r="1.90" fill="#4a4b5e" />
<text transform="translate(1343.50,214.70) scale(0.6000,1)" font-size="10.87" font-weight="bold" fill="#474858" stroke="#474858" stroke-width="0.5" textLength="8.36" lengthAdjust="spacing">R</text>
<text transform="translate(1369.50,214.70) scale(0.6000,1)" font-size="10.87" font-weight="bold" fill="#474858" stroke="#474858" stroke-width="0.5" textLength="8.34" lengthAdjust="spacing">F</text>
<text transform="translate(1332.20,236.10) scale(0.6000,1)" font-size="14.64" font-weight="bold" fill="#474858" stroke="#474858" stroke-width="0.5" textLength="87.32" lengthAdjust="spacing">LFO RANGE</text>
<circle cx="1359.30" cy="261.40" r="17.70" fill="url(#halo)" />
<circle cx="1359.30" cy="264.90" r="18.50" fill="url(#ksh)" />
<path d="M1345.65,275.05 A19.3,19.3 0 1 1 1372.95,275.05" fill="none" stroke="#a0a0a2" stroke-width="3.2" stroke-linecap="butt"/>
<circle cx="1359.30" cy="261.40" r="14.00" fill="#4a4b5e" />
<line x1="1359.30" y1="247.40" x2="1359.30" y2="252.58" stroke="#f2f2f2" stroke-width="2.3" />
<line x1="1353.70" y1="284.00" x2="1359.30" y2="293.18" stroke="#474858" stroke-width="1.4" />
<line x1="1364.90" y1="284.00" x2="1359.30" y2="293.18" stroke="#474858" stroke-width="1.4" />
<line x1="1359.30" y1="293.18" x2="1359.30" y2="306.00" stroke="#474858" stroke-width="1.3" />
<path d="M1352.7,282 L1355.8999999999999,286 L1351.8999999999999,286.8 Z" fill="#474858" stroke="none" stroke-width="1" />
<path d="M1365.8999999999999,282 L1362.7,286 L1366.7,286.8 Z" fill="#474858" stroke="none" stroke-width="1" />
<path d="M1356.8,304.5 L1361.8,304.5 L1359.3,308 Z" fill="#474858" stroke="none" stroke-width="1" />
<circle cx="1359.30" cy="332.60" r="17.70" fill="url(#halo)" />
<circle cx="1359.30" cy="336.10" r="18.50" fill="url(#ksh)" />
<path d="M1345.65,346.25 A19.3,19.3 0 1 1 1372.95,346.25" fill="none" stroke="#a0a0a2" stroke-width="3.2" stroke-linecap="butt"/>
<circle cx="1359.30" cy="332.60" r="14.00" fill="#4a4b5e" />
<line x1="1359.30" y1="318.60" x2="1359.30" y2="323.78" stroke="#f2f2f2" stroke-width="2.3" />
<text transform="translate(1334.00,367.70) scale(0.6000,1)" font-size="14.06" font-weight="bold" fill="#474858" stroke="#474858" stroke-width="0.5" textLength="78.35" lengthAdjust="spacing">EXP MODE</text>
<rect x="1408.00" y="89.00" width="82.00" height="294.00" rx="1.5" fill="#e4e4e4" />
<rect x="1408.00" y="89.00" width="82.00" height="30.80" rx="1.5" fill="#c3c3c3" />
<rect x="1408.00" y="118.00" width="82.00" height="1.80" rx="0" fill="#9c9c9c" />
<text transform="translate(1421.00,111.50) scale(0.6000,1)" font-size="20.00" font-weight="bold" fill="#474858" stroke="#474858" stroke-width="0.5" textLength="85.69" lengthAdjust="spacing">OUTPUT</text>
<text transform="translate(1416.40,138.50) scale(0.6000,1)" font-size="14.64" font-weight="bold" fill="#474858" stroke="#474858" stroke-width="0.5" textLength="109.64" lengthAdjust="spacing">SOFT CLIPPER</text>
<circle cx="1448.60" cy="165.10" r="18.10" fill="url(#ksh)" />
<path d="M1438.60,178.92 A20,20 0 0 1 1436.29,145.84" fill="none" stroke="#4a4b5e" stroke-width="3.4" stroke-linecap="butt"/>
<circle cx="1448.60" cy="161.60" r="13.60" fill="#4a4b5e" />
<line x1="1441.80" y1="149.82" x2="1444.32" y2="154.18" stroke="#f2f2f2" stroke-width="2.3" />
<text transform="translate(1425.40,202.90) scale(0.5809,1)" font-size="14.78" font-weight="bold" fill="#474858" stroke="#474858" stroke-width="0.5" textLength="82.13" lengthAdjust="spacing">FEEDBACK</text>
<circle cx="1448.60" cy="231.30" r="18.10" fill="url(#ksh)" />
<path d="M1438.60,245.12 A20,20 0 0 1 1428.68,229.54" fill="none" stroke="#4a4b5e" stroke-width="3.4" stroke-linecap="butt"/>
<circle cx="1448.60" cy="227.80" r="13.60" fill="#4a4b5e" />
<line x1="1436.82" y1="221.00" x2="1441.18" y2="223.52" stroke="#f2f2f2" stroke-width="2.3" />
<text transform="translate(1438.00,266.90) scale(0.5899,1)" font-size="14.78" font-weight="bold" fill="#474858" stroke="#474858" stroke-width="0.5" textLength="36.96" lengthAdjust="spacing">GAIN</text>
<circle cx="1448.60" cy="295.30" r="18.10" fill="url(#ksh)" />
<path d="M1434.46,305.94 A20,20 0 1 1 1462.74,305.94" fill="none" stroke="#4a4b5e" stroke-width="3.4" stroke-linecap="butt"/>
<circle cx="1448.60" cy="291.80" r="13.60" fill="#4a4b5e" />
<line x1="1459.02" y1="300.54" x2="1455.16" y2="297.31" stroke="#f2f2f2" stroke-width="2.3" />
<text transform="translate(1440.60,330.80) scale(0.5841,1)" font-size="14.64" font-weight="bold" fill="#474858" stroke="#474858" stroke-width="0.5" textLength="29.82" lengthAdjust="spacing">PAN</text>
<circle cx="1448.60" cy="359.70" r="18.10" fill="url(#ksh)" />
<circle cx="1448.60" cy="356.20" r="13.60" fill="#4a4b5e" />
<line x1="1448.60" y1="342.60" x2="1448.60" y2="347.63" stroke="#f2f2f2" stroke-width="2.3" />
<text transform="translate(1421.50,376.00) scale(0.6000,1)" font-size="13.04" font-weight="bold" fill="#474858" stroke="#474858" stroke-width="0.5" textLength="9.18" lengthAdjust="spacing">L</text>
<text transform="translate(1470.00,376.00) scale(0.6000,1)" font-size="13.04" font-weight="bold" fill="#474858" stroke="#474858" stroke-width="0.5" textLength="10.03" lengthAdjust="spacing">R</text>
<rect x="10.00" y="388.00" width="490.00" height="404.00" rx="1.5" fill="#e4e4e4" />
<rect x="10.00" y="388.00" width="490.00" height="30.60" rx="1.5" fill="#e2d35b" />
<rect x="456.00" y="388.00" width="44.00" height="30.60" rx="0" fill="#d8c748" />
<rect x="10.00" y="417.00" width="490.00" height="1.60" rx="0" fill="#c0ad3a" />
<text transform="translate(19.90,410.00) scale(0.6000,1)" font-size="18.55" font-weight="bold" fill="#474858" stroke="#474858" stroke-width="0.5" textLength="138.85" lengthAdjust="spacing">RESONATOR 1</text>
<text transform="translate(332.20,407.40) scale(0.6000,1)" font-size="13.33" font-weight="bold" fill="#474858" stroke="#474858" stroke-width="0.5" textLength="137.14" lengthAdjust="spacing">.OSCILLATOR COMB</text>
<path d="M424.7,402.8 l4,-3.2 v2.2 h4.5 v2 h-4.5 v2.2 Z" fill="#474858" stroke="none" stroke-width="1" />
<path d="M447.7,402.8 l-4,-3.2 v2.2 h-4.5 v2 h4.5 v2.2 Z" fill="#474858" stroke="none" stroke-width="1" />
<rect x="466.70" y="398.00" width="6.00" height="9.50" rx="0" fill="#474858" />
<rect x="467.90" y="402.50" width="3.60" height="3.80" rx="0" fill="#eeeeee" />
<text transform="translate(479.50,407.40) scale(0.5970,1)" font-size="13.62" font-weight="bold" fill="#474858" stroke="#474858" stroke-width="0.5" textLength="20.43" lengthAdjust="spacing">ON</text>
<rect x="39.50" y="432.80" width="41.50" height="17.20" rx="0" fill="#e2d35b" />
<text transform="translate(40.50,448.00) scale(0.6000,1)" font-size="19.13" font-weight="bold" fill="#474858" stroke="#474858" stroke-width="0.5" textLength="64.98" lengthAdjust="spacing">Y AXIS</text>
<line x1="86.60" y1="434.50" x2="86.60" y2="449.50" stroke="#474858" stroke-width="1.3" />
<path d="M86.6,431.5 L84.3,436.0 L88.89999999999999,436.0 Z" fill="#474858" stroke="none" stroke-width="1" />
<path d="M86.6,452.5 L84.3,448.0 L88.89999999999999,448.0 Z" fill="#474858" stroke="none" stroke-width="1" />
<text transform="translate(30.00,482.20) scale(0.6000,1)" font-size="13.33" font-weight="bold" fill="#474858" stroke="#474858" stroke-width="0.5" textLength="100.86" lengthAdjust="spacing">EXP AMOUNT</text>
<path d="M36.57,536.02 A29.6,29.6 0 0 1 38.97,496.87" fill="none" stroke="#4a4b5e" stroke-width="2.9" stroke-linecap="butt"/>
<path d="M84.15,500.82 A29.6,29.6 0 0 1 80.83,538.73" fill="none" stroke="#4a4b5e" stroke-width="2.9" stroke-linecap="butt"/>
<circle cx="59.90" cy="517.80" r="17.70" fill="url(#halo)" />
<circle cx="59.90" cy="521.30" r="18.10" fill="url(#ksh)" />
<path d="M46.25,531.45 A19.3,19.3 0 1 1 73.55,531.45" fill="none" stroke="#a0a0a2" stroke-width="3.2" stroke-linecap="butt"/>
<circle cx="59.90" cy="517.80" r="13.60" fill="#4a4b5e" />
<line x1="59.90" y1="504.20" x2="59.90" y2="509.23" stroke="#f2f2f2" stroke-width="2.3" />
<circle cx="80.26" cy="497.44" r="5.90" fill="#e59ee0" />
<circle cx="80.26" cy="497.44" r="4.20" fill="#4a4b5c" />
<circle cx="39.54" cy="538.16" r="5.90" fill="#e59ee0" />
<circle cx="39.54" cy="538.16" r="4.20" fill="#4a4b5c" />
<circle cx="59.90" cy="491.70" r="1.90" fill="#4a4b5e" />
<text transform="translate(45.10,551.00) scale(0.5750,1)" font-size="10.87" font-weight="bold" fill="#474858" stroke="#474858" stroke-width="0.5" textLength="7.85" lengthAdjust="spacing">R</text>
<text transform="translate(72.40,551.00) scale(0.6000,1)" font-size="10.87" font-weight="bold" fill="#474858" stroke="#474858" stroke-width="0.5" textLength="8.34" lengthAdjust="spacing">F</text>
<text transform="translate(34.40,573.20) scale(0.6000,1)" font-size="13.04" font-weight="bold" fill="#474858" stroke="#474858" stroke-width="0.5" textLength="86.15" lengthAdjust="spacing">LFO RANGE</text>
<circle cx="59.90" cy="600.00" r="17.70" fill="url(#halo)" />
<circle cx="59.90" cy="603.50" r="18.50" fill="url(#ksh)" />
<path d="M46.25,613.65 A19.3,19.3 0 1 1 73.55,613.65" fill="none" stroke="#a0a0a2" stroke-width="3.2" stroke-linecap="butt"/>
<circle cx="59.90" cy="600.00" r="14.00" fill="#4a4b5e" />
<line x1="59.90" y1="586.00" x2="59.90" y2="591.18" stroke="#f2f2f2" stroke-width="2.3" />
<line x1="54.30" y1="620.00" x2="59.90" y2="630.04" stroke="#474858" stroke-width="1.4" />
<line x1="65.50" y1="620.00" x2="59.90" y2="630.04" stroke="#474858" stroke-width="1.4" />
<line x1="59.90" y1="630.04" x2="59.90" y2="644.00" stroke="#474858" stroke-width="1.3" />
<path d="M53.3,618 L56.5,622 L52.5,622.8 Z" fill="#474858" stroke="none" stroke-width="1" />
<path d="M66.5,618 L63.3,622 L67.3,622.8 Z" fill="#474858" stroke="none" stroke-width="1" />
<path d="M57.4,642.5 L62.4,642.5 L59.9,646 Z" fill="#474858" stroke="none" stroke-width="1" />
<circle cx="59.90" cy="671.00" r="17.70" fill="url(#halo)" />
<circle cx="59.90" cy="674.50" r="18.50" fill="url(#ksh)" />
<path d="M46.25,684.65 A19.3,19.3 0 1 1 73.55,684.65" fill="none" stroke="#a0a0a2" stroke-width="3.2" stroke-linecap="butt"/>
<circle cx="59.90" cy="671.00" r="14.00" fill="#4a4b5e" />
<line x1="59.90" y1="657.00" x2="59.90" y2="662.18" stroke="#f2f2f2" stroke-width="2.3" />
<text transform="translate(36.40,706.60) scale(0.6000,1)" font-size="13.04" font-weight="bold" fill="#474858" stroke="#474858" stroke-width="0.5" textLength="78.35" lengthAdjust="spacing">EXP MODE</text>
<circle cx="55.60" cy="737.00" r="3.50" fill="#b0b0b0" />
<circle cx="55.60" cy="736.50" r="3.30" fill="#c3c3c3" />
<circle cx="68.50" cy="737.00" r="3.50" fill="#b0b0b0" />
<circle cx="68.50" cy="736.50" r="3.30" fill="#c3c3c3" />
<circle cx="48.90" cy="744.50" r="3.50" fill="#b0b0b0" />
<circle cx="48.90" cy="744.00" r="3.30" fill="#c3c3c3" />
<circle cx="61.90" cy="744.50" r="3.50" fill="#b0b0b0" />
<circle cx="61.90" cy="744.00" r="3.30" fill="#c3c3c3" />
<circle cx="74.50" cy="744.50" r="3.50" fill="#b0b0b0" />
<circle cx="74.50" cy="744.00" r="3.30" fill="#c3c3c3" />
<circle cx="42.90" cy="753.00" r="3.50" fill="#b0b0b0" />
<circle cx="42.90" cy="752.50" r="3.30" fill="#c3c3c3" />
<circle cx="55.60" cy="753.00" r="3.50" fill="#b0b0b0" />
<circle cx="55.60" cy="752.50" r="3.30" fill="#c3c3c3" />
<circle cx="68.50" cy="753.00" r="3.50" fill="#b0b0b0" />
<circle cx="68.50" cy="752.50" r="3.30" fill="#c3c3c3" />
<circle cx="81.10" cy="753.00" r="3.50" fill="#b0b0b0" />
<circle cx="81.10" cy="752.50" r="3.30" fill="#c3c3c3" />
<circle cx="48.90" cy="760.50" r="3.50" fill="#b0b0b0" />
<circle cx="48.90" cy="760.00" r="3.30" fill="#c3c3c3" />
<circle cx="61.90" cy="760.50" r="3.50" fill="#b0b0b0" />
<circle cx="61.90" cy="760.00" r="3.30" fill="#c3c3c3" />
<circle cx="74.50" cy="760.50" r="3.50" fill="#b0b0b0" />
<circle cx="74.50" cy="760.00" r="3.30" fill="#c3c3c3" />
<circle cx="55.60" cy="768.50" r="3.50" fill="#b0b0b0" />
<circle cx="55.60" cy="768.00" r="3.30" fill="#c3c3c3" />
<circle cx="68.50" cy="768.50" r="3.50" fill="#b0b0b0" />
<circle cx="68.50" cy="768.00" r="3.30" fill="#c3c3c3" />
<rect x="106.00" y="428.00" width="2.00" height="261.50" rx="0" fill="#a7a7a9" />
<rect x="112.00" y="428.00" width="2.00" height="261.50" rx="0" fill="#a7a7a9" />
<rect x="123.00" y="430.00" width="264.40" height="264.40" rx="3" fill="#bdbdbd" />
<rect x="125.00" y="431.00" width="259.40" height="259.40" rx="2.5" fill="#3a3a40" />
<rect x="123.00" y="696.00" width="262.00" height="1.80" rx="0" fill="#a9a9ab" />
<rect x="123.00" y="703.00" width="262.00" height="1.80" rx="0" fill="#a9a9ab" />
<rect x="123.00" y="712.00" width="264.40" height="80.00" rx="0" fill="#ececec" />
<text transform="translate(417.00,444.30) scale(0.6000,1)" font-size="12.90" font-weight="bold" fill="#474858" stroke="#474858" stroke-width="0.5" textLength="100.03" lengthAdjust="spacing">EXP AMOUNT</text>
<path d="M423.67,498.02 A29.6,29.6 0 0 1 426.07,458.87" fill="none" stroke="#4a4b5e" stroke-width="2.9" stroke-linecap="butt"/>
<path d="M471.25,462.82 A29.6,29.6 0 0 1 467.93,500.73" fill="none" stroke="#4a4b5e" stroke-width="2.9" stroke-linecap="butt"/>
<circle cx="447.00" cy="479.80" r="17.70" fill="url(#halo)" />
<circle cx="447.00" cy="483.30" r="18.10" fill="url(#ksh)" />
<path d="M433.35,493.45 A19.3,19.3 0 1 1 460.65,493.45" fill="none" stroke="#a0a0a2" stroke-width="3.2" stroke-linecap="butt"/>
<circle cx="447.00" cy="479.80" r="13.60" fill="#4a4b5e" />
<line x1="447.00" y1="466.20" x2="447.00" y2="471.23" stroke="#f2f2f2" stroke-width="2.3" />
<circle cx="467.36" cy="459.44" r="5.90" fill="#e59ee0" />
<circle cx="467.36" cy="459.44" r="4.20" fill="#4a4b5c" />
<circle cx="426.64" cy="500.16" r="5.90" fill="#e59ee0" />
<circle cx="426.64" cy="500.16" r="4.20" fill="#4a4b5c" />
<circle cx="447.00" cy="453.70" r="1.90" fill="#4a4b5e" />
<text transform="translate(432.20,513.00) scale(0.5750,1)" font-size="10.87" font-weight="bold" fill="#474858" stroke="#474858" stroke-width="0.5" textLength="7.85" lengthAdjust="spacing">R</text>
<text transform="translate(459.50,513.00) scale(0.6000,1)" font-size="10.87" font-weight="bold" fill="#474858" stroke="#474858" stroke-width="0.5" textLength="8.34" lengthAdjust="spacing">F</text>
<text transform="translate(421.40,535.40) scale(0.6000,1)" font-size="13.04" font-weight="bold" fill="#474858" stroke="#474858" stroke-width="0.5" textLength="85.98" lengthAdjust="spacing">LFO RANGE</text>
<circle cx="447.00" cy="562.00" r="17.70" fill="url(#halo)" />
<circle cx="447.00" cy="565.50" r="18.50" fill="url(#ksh)" />
<path d="M433.35,575.65 A19.3,19.3 0 1 1 460.65,575.65" fill="none" stroke="#a0a0a2" stroke-width="3.2" stroke-linecap="butt"/>
<circle cx="447.00" cy="562.00" r="14.00" fill="#4a4b5e" />
<line x1="447.00" y1="548.00" x2="447.00" y2="553.18" stroke="#f2f2f2" stroke-width="2.3" />
<line x1="441.40" y1="582.00" x2="447.00" y2="592.04" stroke="#474858" stroke-width="1.4" />
<line x1="452.60" y1="582.00" x2="447.00" y2="592.04" stroke="#474858" stroke-width="1.4" />
<line x1="447.00" y1="592.04" x2="447.00" y2="606.00" stroke="#474858" stroke-width="1.3" />
<path d="M440.4,580 L443.6,584 L439.6,584.8 Z" fill="#474858" stroke="none" stroke-width="1" />
<path d="M453.6,580 L450.4,584 L454.4,584.8 Z" fill="#474858" stroke="none" stroke-width="1" />
<path d="M444.5,604.5 L449.5,604.5 L447,608 Z" fill="#474858" stroke="none" stroke-width="1" />
<circle cx="447.00" cy="633.60" r="17.70" fill="url(#halo)" />
<circle cx="447.00" cy="637.10" r="18.50" fill="url(#ksh)" />
<path d="M433.35,647.25 A19.3,19.3 0 1 1 460.65,647.25" fill="none" stroke="#a0a0a2" stroke-width="3.2" stroke-linecap="butt"/>
<circle cx="447.00" cy="633.60" r="14.00" fill="#4a4b5e" />
<line x1="447.00" y1="619.60" x2="447.00" y2="624.78" stroke="#f2f2f2" stroke-width="2.3" />
<text transform="translate(423.70,667.80) scale(0.6000,1)" font-size="13.33" font-weight="bold" fill="#474858" stroke="#474858" stroke-width="0.5" textLength="78.35" lengthAdjust="spacing">EXP MODE</text>
<rect x="425.00" y="692.90" width="42.00" height="16.80" rx="0" fill="#e2d35b" />
<text transform="translate(426.50,707.60) scale(0.6000,1)" font-size="18.84" font-weight="bold" fill="#474858" stroke="#474858" stroke-width="0.5" textLength="65.03" lengthAdjust="spacing">X AXIS</text>
<line x1="401.00" y1="701.90" x2="414.40" y2="701.90" stroke="#474858" stroke-width="1.3" />
<path d="M398,701.9 L402.5,699.3 L402.5,704.5 Z" fill="#474858" stroke="none" stroke-width="1" />
<path d="M417.4,701.9 L412.9,699.3 L412.9,704.5 Z" fill="#474858" stroke="none" stroke-width="1" />
<circle cx="440.20" cy="737.00" r="3.50" fill="#b0b0b0" />
<circle cx="440.20" cy="736.50" r="3.30" fill="#c3c3c3" />
<circle cx="453.10" cy="737.00" r="3.50" fill="#b0b0b0" />
<circle cx="453.10" cy="736.50" r="3.30" fill="#c3c3c3" />
<circle cx="433.50" cy="744.50" r="3.50" fill="#b0b0b0" />
<circle cx="433.50" cy="744.00" r="3.30" fill="#c3c3c3" />
<circle cx="446.50" cy="744.50" r="3.50" fill="#b0b0b0" />
<circle cx="446.50" cy="744.00" r="3.30" fill="#c3c3c3" />
<circle cx="459.10" cy="744.50" r="3.50" fill="#b0b0b0" />
<circle cx="459.10" cy="744.00" r="3.30" fill="#c3c3c3" />
<circle cx="427.50" cy="753.00" r="3.50" fill="#b0b0b0" />
<circle cx="427.50" cy="752.50" r="3.30" fill="#c3c3c3" />
<circle cx="440.20" cy="753.00" r="3.50" fill="#b0b0b0" />
<circle cx="440.20" cy="752.50" r="3.30" fill="#c3c3c3" />
<circle cx="453.10" cy="753.00" r="3.50" fill="#b0b0b0" />
<circle cx="453.10" cy="752.50" r="3.30" fill="#c3c3c3" />
<circle cx="465.70" cy="753.00" r="3.50" fill="#b0b0b0" />
<circle cx="465.70" cy="752.50" r="3.30" fill="#c3c3c3" />
<circle cx="433.50" cy="760.50" r="3.50" fill="#b0b0b0" />
<circle cx="433.50" cy="760.00" r="3.30" fill="#c3c3c3" />
<circle cx="446.50" cy="760.50" r="3.50" fill="#b0b0b0" />
<circle cx="446.50" cy="760.00" r="3.30" fill="#c3c3c3" />
<circle cx="459.10" cy="760.50" r="3.50" fill="#b0b0b0" />
<circle cx="459.10" cy="760.00" r="3.30" fill="#c3c3c3" />
<circle cx="440.20" cy="768.50" r="3.50" fill="#b0b0b0" />
<circle cx="440.20" cy="768.00" r="3.30" fill="#c3c3c3" />
<circle cx="453.10" cy="768.50" r="3.50" fill="#b0b0b0" />
<circle cx="453.10" cy="768.00" r="3.30" fill="#c3c3c3" />
<rect x="146.50" y="431.00" width="19.98" height="259.40" rx="0" fill="#47463f" />
<rect x="186.46" y="431.00" width="19.98" height="259.40" rx="0" fill="#47463f" />
<rect x="226.42" y="431.00" width="19.98" height="259.40" rx="0" fill="#47463f" />
<rect x="266.38" y="431.00" width="19.98" height="259.40" rx="0" fill="#47463f" />
<rect x="306.34" y="431.00" width="19.98" height="259.40" rx="0" fill="#47463f" />
<rect x="346.30" y="431.00" width="19.98" height="259.40" rx="0" fill="#47463f" />
<line x1="146.50" y1="431.00" x2="146.50" y2="690.40" stroke="#9a8f4c" stroke-width="0.9" />
<line x1="166.48" y1="431.00" x2="166.48" y2="690.40" stroke="#9a8f4c" stroke-width="0.9" />
<line x1="186.46" y1="431.00" x2="186.46" y2="690.40" stroke="#9a8f4c" stroke-width="0.9" />
<line x1="206.44" y1="431.00" x2="206.44" y2="690.40" stroke="#9a8f4c" stroke-width="0.9" />
<line x1="226.42" y1="431.00" x2="226.42" y2="690.40" stroke="#9a8f4c" stroke-width="0.9" />
<line x1="246.40" y1="431.00" x2="246.40" y2="690.40" stroke="#9a8f4c" stroke-width="0.9" />
<line x1="266.38" y1="431.00" x2="266.38" y2="690.40" stroke="#9a8f4c" stroke-width="0.9" />
<line x1="286.36" y1="431.00" x2="286.36" y2="690.40" stroke="#9a8f4c" stroke-width="0.9" />
<line x1="306.34" y1="431.00" x2="306.34" y2="690.40" stroke="#9a8f4c" stroke-width="0.9" />
<line x1="326.32" y1="431.00" x2="326.32" y2="690.40" stroke="#9a8f4c" stroke-width="0.9" />
<line x1="346.30" y1="431.00" x2="346.30" y2="690.40" stroke="#9a8f4c" stroke-width="0.9" />
<line x1="366.28" y1="431.00" x2="366.28" y2="690.40" stroke="#9a8f4c" stroke-width="0.9" />
<line x1="125.00" y1="448.20" x2="384.40" y2="448.20" stroke="#9a8f4c" stroke-width="0.9" />
<line x1="125.00" y1="469.23" x2="384.40" y2="469.23" stroke="#9a8f4c" stroke-width="0.9" />
<line x1="125.00" y1="490.26" x2="384.40" y2="490.26" stroke="#9a8f4c" stroke-width="0.9" />
<line x1="125.00" y1="511.29" x2="384.40" y2="511.29" stroke="#9a8f4c" stroke-width="0.9" />
<line x1="125.00" y1="532.32" x2="384.40" y2="532.32" stroke="#9a8f4c" stroke-width="0.9" />
<line x1="125.00" y1="553.35" x2="384.40" y2="553.35" stroke="#9a8f4c" stroke-width="0.9" />
<line x1="125.00" y1="574.38" x2="384.40" y2="574.38" stroke="#9a8f4c" stroke-width="0.9" />
<line x1="125.00" y1="595.41" x2="384.40" y2="595.41" stroke="#9a8f4c" stroke-width="0.9" />
<line x1="125.00" y1="616.44" x2="384.40" y2="616.44" stroke="#9a8f4c" stroke-width="0.9" />
<line x1="125.00" y1="637.47" x2="384.40" y2="637.47" stroke="#9a8f4c" stroke-width="0.9" />
<line x1="125.00" y1="658.50" x2="384.40" y2="658.50" stroke="#9a8f4c" stroke-width="0.9" />
<line x1="125.00" y1="679.53" x2="384.40" y2="679.53" stroke="#9a8f4c" stroke-width="0.9" />
<path d="M127.0,438.3 L128.0,439.6 L129.0,441.0 L130.0,442.4 L131.0,443.7 L132.0,444.7 L133.0,445.4 L134.0,445.6 L135.0,445.4 L136.0,444.7 L137.0,443.7 L138.0,442.4 L139.0,441.0 L140.0,439.6 L141.0,438.3 L142.0,437.3 L143.0,436.6 L144.0,436.4 L145.0,436.6 L146.0,437.3 L147.0,438.3 L148.0,439.6 L149.0,441.0 L150.0,442.4 L151.0,443.7 L152.0,444.7 L153.0,445.4 L154.0,445.6 L155.0,445.4 L156.0,444.7 L157.0,443.7 L158.0,442.4 L159.0,441.0 L160.0,439.6 L161.0,438.3 L162.0,437.3 L163.0,436.6 L164.0,436.4 L165.0,436.6 L166.0,437.3 L167.0,438.3 L168.0,439.6 L169.0,441.0 L170.0,442.4 L171.0,443.7 L172.0,444.7 L173.0,445.4 L174.0,445.6 L175.0,445.4 L176.0,444.7 L177.0,443.7 L178.0,442.4 L179.0,441.0 L180.0,439.6 L181.0,438.3 L182.0,437.3 L183.0,436.6 L184.0,436.4 L185.0,436.6 L186.0,437.3 L187.0,438.3 L188.0,439.6 L189.0,441.0 L190.0,442.4 L191.0,443.7 L192.0,444.7 L193.0,445.4 L194.0,445.6 L195.0,445.4 L196.0,444.7 L197.0,443.7 L198.0,442.4 L199.0,441.0 L200.0,439.6 L201.0,438.3 L202.0,437.3 L203.0,436.6 L204.0,436.4 L205.0,436.6 L206.0,437.3 L207.0,438.3 L208.0,439.6 L209.0,441.0 L210.0,442.4 L211.0,443.7 L212.0,444.7 L213.0,445.4 L214.0,445.6 L215.0,445.4 L216.0,444.7 L217.0,443.7 L218.0,442.4 L219.0,441.0 L220.0,439.6 L221.0,438.3 L222.0,437.3 L223.0,436.6 L224.0,436.4 L225.0,436.6 L226.0,437.3 L227.0,438.3 L228.0,439.6 L229.0,441.0 L230.0,442.4 L231.0,443.7 L232.0,444.7 L233.0,445.4 L234.0,445.6 L235.0,445.4 L236.0,444.7 L237.0,443.7 L238.0,442.4 L239.0,441.0 L240.0,439.6 L241.0,438.3 L242.0,437.3 L243.0,436.6 L244.0,436.4 L245.0,436.6 L246.0,437.3 L247.0,438.3 L248.0,439.6 L249.0,441.0 L250.0,442.4 L251.0,443.7 L252.0,444.7 L253.0,445.4 L254.0,445.6 L255.0,445.4 L256.0,444.7 L257.0,443.7 L258.0,442.4 L259.0,441.0 L260.0,439.6 L261.0,438.3 L262.0,437.3 L263.0,436.6 L264.0,436.4 L265.0,436.6 L266.0,437.3 L267.0,438.3 L268.0,439.6 L269.0,441.0 L270.0,442.4 L271.0,443.7 L272.0,444.7 L273.0,445.4 L274.0,445.6 L275.0,445.4 L276.0,444.7 L277.0,443.7 L278.0,442.4 L279.0,441.0 L280.0,439.6 L281.0,438.3 L282.0,437.3 L283.0,436.6 L284.0,436.4 L285.0,436.6 L286.0,437.3 L287.0,438.3 L288.0,439.6 L289.0,441.0 L290.0,442.4 L291.0,443.7 L292.0,444.7 L293.0,445.4 L294.0,445.6 L295.0,445.4 L296.0,444.7 L297.0,443.7 L298.0,442.4 L299.0,441.0 L300.0,439.6 L301.0,438.3 L302.0,437.3 L303.0,436.6 L304.0,436.4 L305.0,436.6 L306.0,437.3 L307.0,438.3 L308.0,439.6 L309.0,441.0 L310.0,442.4 L311.0,443.7 L312.0,444.7 L313.0,445.4 L314.0,445.6 L315.0,445.4 L316.0,444.7 L317.0,443.7 L318.0,442.4 L319.0,441.0 L320.0,439.6 L321.0,438.3 L322.0,437.3 L323.0,436.6 L324.0,436.4 L325.0,436.6 L326.0,437.3 L327.0,438.3 L328.0,439.6 L329.0,441.0 L330.0,442.4 L331.0,443.7 L332.0,444.7 L333.0,445.4 L334.0,445.6 L335.0,445.4 L336.0,444.7 L337.0,443.7 L338.0,442.4 L339.0,441.0 L340.0,439.6 L341.0,438.3 L342.0,437.3 L343.0,436.6 L344.0,436.4 L345.0,436.6 L346.0,437.3 L347.0,438.3 L348.0,439.6 L349.0,441.0 L350.0,442.4 L351.0,443.7 L352.0,444.7 L353.0,445.4 L354.0,445.6 L355.0,445.4 L356.0,444.7 L357.0,443.7 L358.0,442.4 L359.0,441.0 L360.0,439.6 L361.0,438.3 L362.0,437.3 L363.0,436.6 L364.0,436.4 L365.0,436.6 L366.0,437.3 L367.0,438.3 L368.0,439.6 L369.0,441.0 L370.0,442.4 L371.0,443.7 L372.0,444.7 L373.0,445.4 L374.0,445.6 L375.0,445.4 L376.0,444.7 L377.0,443.7 L378.0,442.4 L379.0,441.0 L380.0,439.6 L381.0,438.3 L382.0,437.3 L383.0,436.6 L384.0,436.4 L385.0,436.6 L386.0,437.3" fill="none" stroke="#e6d45c" stroke-width="2" />
<path d="M127.0,682.5 L137.1,670.8 L147.0,682.5 L157.0,670.8 L166.9,682.5 L176.8,670.8 L180.7,677.2 L186.8,682.5 L190.6,675.6 L196.7,670.8 L198.8,677.7 L206.6,682.5 L208.8,674.6 L216.5,670.8 L217.0,678.3 L226.5,682.5 L226.9,673.0 L236.4,670.8 L236.9,678.3 L246.3,682.5 L246.8,673.0 L256.3,670.8 L256.8,678.3 L266.2,682.5 L266.7,673.0 L276.1,670.8 L276.6,678.3 L286.1,682.5 L286.5,673.0 L296.0,670.8 L296.5,678.3 L305.9,682.5 L306.4,673.0 L315.8,670.8 L316.3,678.3 L325.8,682.5 L326.2,673.0 L335.7,670.8 L336.2,681.0 L345.6,682.5 L355.6,670.8 L356.1,682.5 L375.4,670.8 L375.9,682.5 L384.0,682.5" fill="none" stroke="#e6d45c" stroke-width="2" stroke-linejoin="round"/>
<rect x="125.00" y="688.40" width="259.40" height="2.00" rx="0" fill="#3a3a40" />
<clipPath id="r1c"><rect x="125" y="431" width="259.4" height="259.4"/></clipPath>
<g clip-path="url(#r1c)">
<circle cx="126.00" cy="683.50" r="8.00" fill="#cfcfcf" />
<circle cx="126.00" cy="683.50" r="6.00" fill="none" stroke="#e6d45c" stroke-width="2.6"/>
</g>
<text transform="translate(150.40,732.00) scale(0.6000,1)" font-size="13.04" font-weight="bold" fill="#474858" stroke="#474858" stroke-width="0.5" textLength="75.15" lengthAdjust="spacing">OSC.RESO</text>
<circle cx="173.00" cy="761.50" r="18.70" fill="url(#halo)" />
<circle cx="173.00" cy="765.00" r="18.50" fill="url(#ksh)" />
<path d="M158.65,775.85 A20.3,20.3 0 1 1 187.35,775.85" fill="none" stroke="#cdcdcf" stroke-width="3.2" stroke-linecap="butt"/>
<path d="M158.65,775.85 A20.3,20.3 0 0 1 152.78,763.27" fill="none" stroke="#e6d45c" stroke-width="3" stroke-linecap="butt"/>
<circle cx="173.00" cy="761.50" r="14.00" fill="#4a4b5e" />
<line x1="160.88" y1="754.50" x2="165.36" y2="757.09" stroke="#f2f2f2" stroke-width="2.3" />
<path d="M200,763 L205,760.3 L205,765.7 Z" fill="#474858" stroke="none" stroke-width="1" />
<line x1="204.00" y1="763.00" x2="228.60" y2="763.00" stroke="#474858" stroke-width="1.3" />
<text transform="translate(247.50,732.00) scale(0.6000,1)" font-size="13.04" font-weight="bold" fill="#474858" stroke="#474858" stroke-width="0.5" textLength="26.64" lengthAdjust="spacing">MIX</text>
<circle cx="254.40" cy="736.80" r="1.90" fill="#4a4b5e" />
<circle cx="254.70" cy="761.50" r="18.70" fill="url(#halo)" />
<circle cx="254.70" cy="765.00" r="18.50" fill="url(#ksh)" />
<path d="M240.35,775.85 A20.3,20.3 0 1 1 269.05,775.85" fill="none" stroke="#cdcdcf" stroke-width="3.2" stroke-linecap="butt"/>
<path d="M240.35,775.85 A20.3,20.3 0 0 1 254.70,741.20" fill="none" stroke="#e6d45c" stroke-width="3" stroke-linecap="butt"/>
<circle cx="254.70" cy="761.50" r="14.00" fill="#4a4b5e" />
<line x1="244.80" y1="771.40" x2="248.46" y2="767.74" stroke="#f2f2f2" stroke-width="2.3" />
<line x1="281.00" y1="763.00" x2="288.00" y2="763.00" stroke="#474858" stroke-width="1.3" />
<path d="M293,763 L288,760.3 L288,765.7 Z" fill="#474858" stroke="none" stroke-width="1" />
<text transform="translate(310.70,732.00) scale(0.6000,1)" font-size="13.04" font-weight="bold" fill="#474858" stroke="#474858" stroke-width="0.5" textLength="89.19" lengthAdjust="spacing">COMB.RESO</text>
<circle cx="337.70" cy="761.40" r="18.70" fill="url(#halo)" />
<circle cx="337.70" cy="764.90" r="18.50" fill="url(#ksh)" />
<path d="M323.35,775.75 A20.3,20.3 0 1 1 352.05,775.75" fill="none" stroke="#cdcdcf" stroke-width="3.2" stroke-linecap="butt"/>
<circle cx="337.70" cy="761.40" r="14.00" fill="#4a4b5e" />
<line x1="337.70" y1="747.40" x2="337.70" y2="752.58" stroke="#f2f2f2" stroke-width="2.3" />
<rect x="326.50" y="778.50" width="5.00" height="1.80" rx="0" fill="#474858" />
<rect x="345.50" y="778.50" width="6.00" height="1.80" rx="0" fill="#474858" />
<rect x="347.60" y="776.40" width="1.80" height="6.00" rx="0" fill="#474858" />
<rect x="505.00" y="388.00" width="490.00" height="404.00" rx="1.5" fill="#e4e4e4" />
<rect x="505.00" y="388.00" width="490.00" height="30.60" rx="1.5" fill="#5cc9a2" />
<rect x="951.00" y="388.00" width="44.00" height="30.60" rx="0" fill="#52b892" />
<rect x="505.00" y="417.00" width="490.00" height="1.60" rx="0" fill="#45a07f" />
<text transform="translate(514.90,410.00) scale(0.6000,1)" font-size="18.55" font-weight="bold" fill="#474858" stroke="#474858" stroke-width="0.5" textLength="138.85" lengthAdjust="spacing">RESONATOR 2</text>
<text transform="translate(811.20,407.40) scale(0.6000,1)" font-size="13.33" font-weight="bold" fill="#474858" stroke="#474858" stroke-width="0.5" textLength="163.14" lengthAdjust="spacing">.VIRTUAL ANALOG PWM</text>
<path d="M919.7,402.8 l4,-3.2 v2.2 h4.5 v2 h-4.5 v2.2 Z" fill="#474858" stroke="none" stroke-width="1" />
<path d="M942.7,402.8 l-4,-3.2 v2.2 h-4.5 v2 h4.5 v2.2 Z" fill="#474858" stroke="none" stroke-width="1" />
<rect x="961.70" y="398.00" width="6.00" height="9.50" rx="0" fill="#474858" />
<rect x="962.90" y="402.50" width="3.60" height="3.80" rx="0" fill="#eeeeee" />
<text transform="translate(974.50,407.40) scale(0.5970,1)" font-size="13.62" font-weight="bold" fill="#474858" stroke="#474858" stroke-width="0.5" textLength="20.43" lengthAdjust="spacing">ON</text>
<rect x="534.50" y="432.80" width="41.50" height="17.20" rx="0" fill="#5cc9a2" />
<text transform="translate(535.50,448.00) scale(0.6000,1)" font-size="19.13" font-weight="bold" fill="#474858" stroke="#474858" stroke-width="0.5" textLength="64.98" lengthAdjust="spacing">Y AXIS</text>
<line x1="581.60" y1="434.50" x2="581.60" y2="449.50" stroke="#474858" stroke-width="1.3" />
<path d="M581.6,431.5 L579.3000000000001,436.0 L583.9,436.0 Z" fill="#474858" stroke="none" stroke-width="1" />
<path d="M581.6,452.5 L579.3000000000001,448.0 L583.9,448.0 Z" fill="#474858" stroke="none" stroke-width="1" />
<text transform="translate(525.00,482.20) scale(0.6000,1)" font-size="13.33" font-weight="bold" fill="#474858" stroke="#474858" stroke-width="0.5" textLength="100.86" lengthAdjust="spacing">EXP AMOUNT</text>
<path d="M531.57,536.02 A29.6,29.6 0 0 1 533.97,496.87" fill="none" stroke="#4a4b5e" stroke-width="2.9" stroke-linecap="butt"/>
<path d="M579.15,500.82 A29.6,29.6 0 0 1 575.83,538.73" fill="none" stroke="#4a4b5e" stroke-width="2.9" stroke-linecap="butt"/>
<circle cx="554.90" cy="517.80" r="17.70" fill="url(#halo)" />
<circle cx="554.90" cy="521.30" r="18.10" fill="url(#ksh)" />
<path d="M541.25,531.45 A19.3,19.3 0 1 1 568.55,531.45" fill="none" stroke="#a0a0a2" stroke-width="3.2" stroke-linecap="butt"/>
<circle cx="554.90" cy="517.80" r="13.60" fill="#4a4b5e" />
<line x1="554.90" y1="504.20" x2="554.90" y2="509.23" stroke="#f2f2f2" stroke-width="2.3" />
<circle cx="575.26" cy="497.44" r="5.90" fill="#e59ee0" />
<circle cx="575.26" cy="497.44" r="4.20" fill="#4a4b5c" />
<circle cx="534.54" cy="538.16" r="5.90" fill="#e59ee0" />
<circle cx="534.54" cy="538.16" r="4.20" fill="#4a4b5c" />
<circle cx="554.90" cy="491.70" r="1.90" fill="#4a4b5e" />
<text transform="translate(540.10,551.00) scale(0.5750,1)" font-size="10.87" font-weight="bold" fill="#474858" stroke="#474858" stroke-width="0.5" textLength="7.85" lengthAdjust="spacing">R</text>
<text transform="translate(567.40,551.00) scale(0.6000,1)" font-size="10.87" font-weight="bold" fill="#474858" stroke="#474858" stroke-width="0.5" textLength="8.34" lengthAdjust="spacing">F</text>
<text transform="translate(529.40,573.20) scale(0.6000,1)" font-size="13.04" font-weight="bold" fill="#474858" stroke="#474858" stroke-width="0.5" textLength="86.15" lengthAdjust="spacing">LFO RANGE</text>
<circle cx="554.90" cy="600.00" r="17.70" fill="url(#halo)" />
<circle cx="554.90" cy="603.50" r="18.50" fill="url(#ksh)" />
<path d="M541.25,613.65 A19.3,19.3 0 1 1 568.55,613.65" fill="none" stroke="#a0a0a2" stroke-width="3.2" stroke-linecap="butt"/>
<circle cx="554.90" cy="600.00" r="14.00" fill="#4a4b5e" />
<line x1="554.90" y1="586.00" x2="554.90" y2="591.18" stroke="#f2f2f2" stroke-width="2.3" />
<line x1="549.30" y1="620.00" x2="554.90" y2="630.04" stroke="#474858" stroke-width="1.4" />
<line x1="560.50" y1="620.00" x2="554.90" y2="630.04" stroke="#474858" stroke-width="1.4" />
<line x1="554.90" y1="630.04" x2="554.90" y2="644.00" stroke="#474858" stroke-width="1.3" />
<path d="M548.3,618 L551.5,622 L547.5,622.8 Z" fill="#474858" stroke="none" stroke-width="1" />
<path d="M561.5,618 L558.3,622 L562.3,622.8 Z" fill="#474858" stroke="none" stroke-width="1" />
<path d="M552.4,642.5 L557.4,642.5 L554.9,646 Z" fill="#474858" stroke="none" stroke-width="1" />
<circle cx="554.90" cy="671.00" r="17.70" fill="url(#halo)" />
<circle cx="554.90" cy="674.50" r="18.50" fill="url(#ksh)" />
<path d="M541.25,684.65 A19.3,19.3 0 1 1 568.55,684.65" fill="none" stroke="#a0a0a2" stroke-width="3.2" stroke-linecap="butt"/>
<circle cx="554.90" cy="671.00" r="14.00" fill="#4a4b5e" />
<line x1="554.90" y1="657.00" x2="554.90" y2="662.18" stroke="#f2f2f2" stroke-width="2.3" />
<text transform="translate(531.40,706.60) scale(0.6000,1)" font-size="13.04" font-weight="bold" fill="#474858" stroke="#474858" stroke-width="0.5" textLength="78.35" lengthAdjust="spacing">EXP MODE</text>
<circle cx="550.60" cy="737.00" r="3.50" fill="#b0b0b0" />
<circle cx="550.60" cy="736.50" r="3.30" fill="#c3c3c3" />
<circle cx="563.50" cy="737.00" r="3.50" fill="#b0b0b0" />
<circle cx="563.50" cy="736.50" r="3.30" fill="#c3c3c3" />
<circle cx="543.90" cy="744.50" r="3.50" fill="#b0b0b0" />
<circle cx="543.90" cy="744.00" r="3.30" fill="#c3c3c3" />
<circle cx="556.90" cy="744.50" r="3.50" fill="#b0b0b0" />
<circle cx="556.90" cy="744.00" r="3.30" fill="#c3c3c3" />
<circle cx="569.50" cy="744.50" r="3.50" fill="#b0b0b0" />
<circle cx="569.50" cy="744.00" r="3.30" fill="#c3c3c3" />
<circle cx="537.90" cy="753.00" r="3.50" fill="#b0b0b0" />
<circle cx="537.90" cy="752.50" r="3.30" fill="#c3c3c3" />
<circle cx="550.60" cy="753.00" r="3.50" fill="#b0b0b0" />
<circle cx="550.60" cy="752.50" r="3.30" fill="#c3c3c3" />
<circle cx="563.50" cy="753.00" r="3.50" fill="#b0b0b0" />
<circle cx="563.50" cy="752.50" r="3.30" fill="#c3c3c3" />
<circle cx="576.10" cy="753.00" r="3.50" fill="#b0b0b0" />
<circle cx="576.10" cy="752.50" r="3.30" fill="#c3c3c3" />
<circle cx="543.90" cy="760.50" r="3.50" fill="#b0b0b0" />
<circle cx="543.90" cy="760.00" r="3.30" fill="#c3c3c3" />
<circle cx="556.90" cy="760.50" r="3.50" fill="#b0b0b0" />
<circle cx="556.90" cy="760.00" r="3.30" fill="#c3c3c3" />
<circle cx="569.50" cy="760.50" r="3.50" fill="#b0b0b0" />
<circle cx="569.50" cy="760.00" r="3.30" fill="#c3c3c3" />
<circle cx="550.60" cy="768.50" r="3.50" fill="#b0b0b0" />
<circle cx="550.60" cy="768.00" r="3.30" fill="#c3c3c3" />
<circle cx="563.50" cy="768.50" r="3.50" fill="#b0b0b0" />
<circle cx="563.50" cy="768.00" r="3.30" fill="#c3c3c3" />
<rect x="601.00" y="428.00" width="2.00" height="261.50" rx="0" fill="#a7a7a9" />
<rect x="607.00" y="428.00" width="2.00" height="261.50" rx="0" fill="#a7a7a9" />
<rect x="618.00" y="430.00" width="264.40" height="264.40" rx="3" fill="#bdbdbd" />
<rect x="620.00" y="431.00" width="259.40" height="259.40" rx="2.5" fill="#3a3a40" />
<rect x="618.00" y="696.00" width="262.00" height="1.80" rx="0" fill="#a9a9ab" />
<rect x="618.00" y="703.00" width="262.00" height="1.80" rx="0" fill="#a9a9ab" />
<rect x="618.00" y="712.00" width="264.40" height="80.00" rx="0" fill="#ececec" />
<text transform="translate(912.00,444.30) scale(0.6000,1)" font-size="12.90" font-weight="bold" fill="#474858" stroke="#474858" stroke-width="0.5" textLength="100.03" lengthAdjust="spacing">EXP AMOUNT</text>
<path d="M918.67,498.02 A29.6,29.6 0 0 1 921.07,458.87" fill="none" stroke="#4a4b5e" stroke-width="2.9" stroke-linecap="butt"/>
<path d="M966.25,462.82 A29.6,29.6 0 0 1 962.93,500.73" fill="none" stroke="#4a4b5e" stroke-width="2.9" stroke-linecap="butt"/>
<circle cx="942.00" cy="479.80" r="17.70" fill="url(#halo)" />
<circle cx="942.00" cy="483.30" r="18.10" fill="url(#ksh)" />
<path d="M928.35,493.45 A19.3,19.3 0 1 1 955.65,493.45" fill="none" stroke="#a0a0a2" stroke-width="3.2" stroke-linecap="butt"/>
<path d="M942.00,460.50 A19.3,19.3 0 0 1 951.65,463.09" fill="none" stroke="#e59ee0" stroke-width="3.2" stroke-linecap="butt"/>
<circle cx="942.00" cy="479.80" r="13.60" fill="#4a4b5e" />
<line x1="948.80" y1="468.02" x2="946.28" y2="472.38" stroke="#f2f2f2" stroke-width="2.3" />
<circle cx="962.36" cy="459.44" r="5.90" fill="#e59ee0" />
<circle cx="962.36" cy="459.44" r="4.20" fill="#4a4b5c" />
<circle cx="921.64" cy="500.16" r="5.90" fill="#e59ee0" />
<circle cx="921.64" cy="500.16" r="4.20" fill="#4a4b5c" />
<circle cx="942.00" cy="453.70" r="1.90" fill="#4a4b5e" />
<text transform="translate(927.20,513.00) scale(0.5750,1)" font-size="10.87" font-weight="bold" fill="#474858" stroke="#474858" stroke-width="0.5" textLength="7.85" lengthAdjust="spacing">R</text>
<text transform="translate(954.50,513.00) scale(0.6000,1)" font-size="10.87" font-weight="bold" fill="#474858" stroke="#474858" stroke-width="0.5" textLength="8.34" lengthAdjust="spacing">F</text>
<text transform="translate(916.40,535.40) scale(0.6000,1)" font-size="13.04" font-weight="bold" fill="#474858" stroke="#474858" stroke-width="0.5" textLength="85.98" lengthAdjust="spacing">LFO RANGE</text>
<circle cx="942.00" cy="562.00" r="17.70" fill="url(#halo)" />
<circle cx="942.00" cy="565.50" r="18.50" fill="url(#ksh)" />
<path d="M928.35,575.65 A19.3,19.3 0 1 1 955.65,575.65" fill="none" stroke="#a0a0a2" stroke-width="3.2" stroke-linecap="butt"/>
<path d="M942.00,542.70 A19.3,19.3 0 0 1 948.60,543.86" fill="none" stroke="#e59ee0" stroke-width="3.2" stroke-linecap="butt"/>
<circle cx="942.00" cy="562.00" r="14.00" fill="#4a4b5e" />
<line x1="942.00" y1="548.00" x2="942.00" y2="553.18" stroke="#f2f2f2" stroke-width="2.3" />
<line x1="936.40" y1="582.00" x2="942.00" y2="592.04" stroke="#474858" stroke-width="1.4" />
<line x1="947.60" y1="582.00" x2="942.00" y2="592.04" stroke="#474858" stroke-width="1.4" />
<line x1="942.00" y1="592.04" x2="942.00" y2="606.00" stroke="#474858" stroke-width="1.3" />
<path d="M935.4,580 L938.6,584 L934.6,584.8 Z" fill="#474858" stroke="none" stroke-width="1" />
<path d="M948.6,580 L945.4,584 L949.4,584.8 Z" fill="#474858" stroke="none" stroke-width="1" />
<path d="M939.5,604.5 L944.5,604.5 L942,608 Z" fill="#474858" stroke="none" stroke-width="1" />
<circle cx="942.00" cy="633.60" r="17.70" fill="url(#halo)" />
<circle cx="942.00" cy="637.10" r="18.50" fill="url(#ksh)" />
<path d="M928.35,647.25 A19.3,19.3 0 1 1 955.65,647.25" fill="none" stroke="#a0a0a2" stroke-width="3.2" stroke-linecap="butt"/>
<path d="M942.00,614.30 A19.3,19.3 0 0 1 948.60,615.46" fill="none" stroke="#e59ee0" stroke-width="3.2" stroke-linecap="butt"/>
<circle cx="942.00" cy="633.60" r="14.00" fill="#4a4b5e" />
<line x1="942.00" y1="619.60" x2="942.00" y2="624.78" stroke="#f2f2f2" stroke-width="2.3" />
<text transform="translate(918.70,667.80) scale(0.6000,1)" font-size="13.33" font-weight="bold" fill="#474858" stroke="#474858" stroke-width="0.5" textLength="78.35" lengthAdjust="spacing">EXP MODE</text>
<rect x="920.00" y="692.90" width="42.00" height="16.80" rx="0" fill="#5cc9a2" />
<text transform="translate(921.50,707.60) scale(0.6000,1)" font-size="18.84" font-weight="bold" fill="#474858" stroke="#474858" stroke-width="0.5" textLength="65.03" lengthAdjust="spacing">X AXIS</text>
<line x1="896.00" y1="701.90" x2="909.40" y2="701.90" stroke="#474858" stroke-width="1.3" />
<path d="M893,701.9 L897.5,699.3 L897.5,704.5 Z" fill="#474858" stroke="none" stroke-width="1" />
<path d="M912.4,701.9 L907.9,699.3 L907.9,704.5 Z" fill="#474858" stroke="none" stroke-width="1" />
<circle cx="935.20" cy="737.00" r="3.50" fill="#b0b0b0" />
<circle cx="935.20" cy="736.50" r="3.30" fill="#c3c3c3" />
<circle cx="948.10" cy="737.00" r="3.50" fill="#b0b0b0" />
<circle cx="948.10" cy="736.50" r="3.30" fill="#c3c3c3" />
<circle cx="928.50" cy="744.50" r="3.50" fill="#b0b0b0" />
<circle cx="928.50" cy="744.00" r="3.30" fill="#c3c3c3" />
<circle cx="941.50" cy="744.50" r="3.50" fill="#b0b0b0" />
<circle cx="941.50" cy="744.00" r="3.30" fill="#c3c3c3" />
<circle cx="954.10" cy="744.50" r="3.50" fill="#b0b0b0" />
<circle cx="954.10" cy="744.00" r="3.30" fill="#c3c3c3" />
<circle cx="922.50" cy="753.00" r="3.50" fill="#b0b0b0" />
<circle cx="922.50" cy="752.50" r="3.30" fill="#c3c3c3" />
<circle cx="935.20" cy="753.00" r="3.50" fill="#b0b0b0" />
<circle cx="935.20" cy="752.50" r="3.30" fill="#c3c3c3" />
<circle cx="948.10" cy="753.00" r="3.50" fill="#b0b0b0" />
<circle cx="948.10" cy="752.50" r="3.30" fill="#c3c3c3" />
<circle cx="960.70" cy="753.00" r="3.50" fill="#b0b0b0" />
<circle cx="960.70" cy="752.50" r="3.30" fill="#c3c3c3" />
<circle cx="928.50" cy="760.50" r="3.50" fill="#b0b0b0" />
<circle cx="928.50" cy="760.00" r="3.30" fill="#c3c3c3" />
<circle cx="941.50" cy="760.50" r="3.50" fill="#b0b0b0" />
<circle cx="941.50" cy="760.00" r="3.30" fill="#c3c3c3" />
<circle cx="954.10" cy="760.50" r="3.50" fill="#b0b0b0" />
<circle cx="954.10" cy="760.00" r="3.30" fill="#c3c3c3" />
<circle cx="935.20" cy="768.50" r="3.50" fill="#b0b0b0" />
<circle cx="935.20" cy="768.00" r="3.30" fill="#c3c3c3" />
<circle cx="948.10" cy="768.50" r="3.50" fill="#b0b0b0" />
<circle cx="948.10" cy="768.00" r="3.30" fill="#c3c3c3" />
<rect x="657.40" y="431.00" width="36.80" height="259.40" rx="0" fill="#4b4c50" fill-opacity="0.45"/>
<rect x="731.00" y="431.00" width="36.80" height="259.40" rx="0" fill="#4b4c50" fill-opacity="0.45"/>
<rect x="804.60" y="431.00" width="36.80" height="259.40" rx="0" fill="#4b4c50" fill-opacity="0.45"/>
<line x1="657.40" y1="431.00" x2="657.40" y2="690.40" stroke="#467f70" stroke-width="0.9" />
<line x1="694.20" y1="431.00" x2="694.20" y2="690.40" stroke="#467f70" stroke-width="0.9" />
<line x1="731.00" y1="431.00" x2="731.00" y2="690.40" stroke="#467f70" stroke-width="0.9" />
<line x1="767.80" y1="431.00" x2="767.80" y2="690.40" stroke="#467f70" stroke-width="0.9" />
<line x1="804.60" y1="431.00" x2="804.60" y2="690.40" stroke="#467f70" stroke-width="0.9" />
<line x1="841.40" y1="431.00" x2="841.40" y2="690.40" stroke="#467f70" stroke-width="0.9" />
<line x1="620.00" y1="440.60" x2="879.40" y2="440.60" stroke="#467f70" stroke-width="0.9" />
<line x1="620.00" y1="454.70" x2="879.40" y2="454.70" stroke="#467f70" stroke-width="0.9" />
<line x1="620.00" y1="468.80" x2="879.40" y2="468.80" stroke="#467f70" stroke-width="0.9" />
<line x1="620.00" y1="482.90" x2="879.40" y2="482.90" stroke="#467f70" stroke-width="0.9" />
<line x1="620.00" y1="497.00" x2="879.40" y2="497.00" stroke="#467f70" stroke-width="0.9" />
<line x1="620.00" y1="511.10" x2="879.40" y2="511.10" stroke="#467f70" stroke-width="0.9" />
<line x1="620.00" y1="525.20" x2="879.40" y2="525.20" stroke="#467f70" stroke-width="0.9" />
<line x1="620.00" y1="539.30" x2="879.40" y2="539.30" stroke="#467f70" stroke-width="0.9" />
<line x1="620.00" y1="553.40" x2="879.40" y2="553.40" stroke="#467f70" stroke-width="0.9" />
<line x1="620.00" y1="567.50" x2="879.40" y2="567.50" stroke="#467f70" stroke-width="0.9" />
<line x1="620.00" y1="581.60" x2="879.40" y2="581.60" stroke="#467f70" stroke-width="0.9" />
<line x1="620.00" y1="595.70" x2="879.40" y2="595.70" stroke="#467f70" stroke-width="0.9" />
<line x1="620.00" y1="609.80" x2="879.40" y2="609.80" stroke="#467f70" stroke-width="0.9" />
<line x1="620.00" y1="623.90" x2="879.40" y2="623.90" stroke="#467f70" stroke-width="0.9" />
<line x1="620.00" y1="638.00" x2="879.40" y2="638.00" stroke="#467f70" stroke-width="0.9" />
<line x1="620.00" y1="652.10" x2="879.40" y2="652.10" stroke="#467f70" stroke-width="0.9" />
<line x1="620.00" y1="666.20" x2="879.40" y2="666.20" stroke="#467f70" stroke-width="0.9" />
<line x1="620.00" y1="680.30" x2="879.40" y2="680.30" stroke="#467f70" stroke-width="0.9" />
<path d="M620.0,440.6 H651.0 V454.8 H657.7 V440.6 H685.0 V454.8 H693.3 V440.6 H716.7 V454.8 H730.0 V440.6 H750.0 V454.8 H766.7 V440.6 H781.7 V454.8 H803.3 V440.6 H813.3 V454.8 H843.3 V440.6 H845.7 V454.8 H878.0 V454.8" fill="none" stroke="#5fd1a8" stroke-width="2.2" />
<path d="M620.0,665.8 H635.7 V679.7 H647.4 V672.0 H657.3 V665.8 H673.5 V679.7 H689.6 V672.0 H694.1 V665.8 H710.3 V679.7 H730.1 V665.8 H749.5 V679.7 H767.5 V672.0 H771.5 V665.8 H784.0 V679.7 H803.8 V672.0 H812.0 V665.8 H821.0 V679.7 H840.7 V672.0 H852.4 V665.8 H858.2 V679.7 H878.0 V679.7" fill="none" stroke="#5fd1a8" stroke-width="2.2" />
<circle cx="751.00" cy="446.90" r="12.50" fill="#000" fill-opacity="0.25"/>
<circle cx="751.00" cy="444.90" r="11.60" fill="#d8d8d8" />
<circle cx="751.00" cy="444.90" r="9.00" fill="#5fd1a8" />
<circle cx="751.00" cy="444.90" r="6.20" fill="none" stroke="#eeeeee" stroke-width="1.6"/>
<line x1="751.00" y1="440.90" x2="751.00" y2="448.90" stroke="#eeeeee" stroke-width="1.6" />
<rect x="750.00" y="702.00" width="44.00" height="3.60" rx="0" fill="#d99ad4" />
<text transform="translate(645.00,732.60) scale(0.6000,1)" font-size="13.33" font-weight="bold" fill="#474858" stroke="#474858" stroke-width="0.5" textLength="74.99" lengthAdjust="spacing">OSC.RESO</text>
<circle cx="667.60" cy="761.30" r="18.70" fill="url(#halo)" />
<circle cx="667.60" cy="764.80" r="18.50" fill="url(#ksh)" />
<path d="M653.25,775.65 A20.3,20.3 0 1 1 681.95,775.65" fill="none" stroke="#cdcdcf" stroke-width="3.2" stroke-linecap="butt"/>
<path d="M653.25,775.65 A20.3,20.3 0 0 1 647.38,763.07" fill="none" stroke="#5cc9a2" stroke-width="3" stroke-linecap="butt"/>
<circle cx="667.60" cy="761.30" r="14.00" fill="#4a4b5e" />
<line x1="654.91" y1="755.38" x2="659.61" y2="757.57" stroke="#f2f2f2" stroke-width="2.3" />
<text transform="translate(725.00,732.60) scale(0.6000,1)" font-size="13.33" font-weight="bold" fill="#474858" stroke="#474858" stroke-width="0.5" textLength="84.18" lengthAdjust="spacing">DRIFT AMT</text>
<circle cx="750.30" cy="761.30" r="18.70" fill="url(#halo)" />
<circle cx="750.30" cy="764.80" r="18.50" fill="url(#ksh)" />
<path d="M735.95,775.65 A20.3,20.3 0 1 1 764.65,775.65" fill="none" stroke="#cdcdcf" stroke-width="3.2" stroke-linecap="butt"/>
<path d="M735.95,775.65 A20.3,20.3 0 0 1 750.30,741.00" fill="none" stroke="#5cc9a2" stroke-width="3" stroke-linecap="butt"/>
<circle cx="750.30" cy="761.30" r="14.00" fill="#4a4b5e" />
<line x1="750.30" y1="747.30" x2="750.30" y2="752.48" stroke="#f2f2f2" stroke-width="2.3" />
<line x1="783.00" y1="761.50" x2="800.60" y2="761.50" stroke="#474858" stroke-width="1.3" />
<path d="M780,761.5 L784.5,758.9 L784.5,764.1 Z" fill="#474858" stroke="none" stroke-width="1" />
<path d="M803.6,761.5 L799.1,758.9 L799.1,764.1 Z" fill="#474858" stroke="none" stroke-width="1" />
<text transform="translate(805.50,732.60) scale(0.6000,1)" font-size="13.33" font-weight="bold" fill="#474858" stroke="#474858" stroke-width="0.5" textLength="91.66" lengthAdjust="spacing">DRIFT RATE</text>
<circle cx="833.00" cy="761.30" r="18.70" fill="url(#halo)" />
<circle cx="833.00" cy="764.80" r="18.50" fill="url(#ksh)" />
<path d="M818.65,775.65 A20.3,20.3 0 1 1 847.35,775.65" fill="none" stroke="#cdcdcf" stroke-width="3.2" stroke-linecap="butt"/>
<circle cx="833.00" cy="761.30" r="14.00" fill="#4a4b5e" />
<line x1="823.10" y1="771.20" x2="826.76" y2="767.54" stroke="#f2f2f2" stroke-width="2.3" />
<rect x="1000.00" y="388.00" width="490.00" height="404.00" rx="1.5" fill="#e4e4e4" />
<rect x="1000.00" y="388.00" width="490.00" height="30.60" rx="1.5" fill="#9e89ee" />
<rect x="1446.00" y="388.00" width="44.00" height="30.60" rx="0" fill="#8f7ad8" />
<rect x="1000.00" y="417.00" width="490.00" height="1.60" rx="0" fill="#7d68cf" />
<text transform="translate(1009.90,410.00) scale(0.6000,1)" font-size="18.55" font-weight="bold" fill="#474858" stroke="#474858" stroke-width="0.5" textLength="138.85" lengthAdjust="spacing">RESONATOR 3</text>
<text transform="translate(1306.20,407.40) scale(0.6000,1)" font-size="13.33" font-weight="bold" fill="#474858" stroke="#474858" stroke-width="0.5" textLength="162.98" lengthAdjust="spacing">.VIRTUAL ANALOG PWM</text>
<path d="M1414.7,402.8 l4,-3.2 v2.2 h4.5 v2 h-4.5 v2.2 Z" fill="#474858" stroke="none" stroke-width="1" />
<path d="M1437.7,402.8 l-4,-3.2 v2.2 h-4.5 v2 h4.5 v2.2 Z" fill="#474858" stroke="none" stroke-width="1" />
<rect x="1456.70" y="398.00" width="6.00" height="9.50" rx="0" fill="#474858" />
<rect x="1457.90" y="402.50" width="3.60" height="3.80" rx="0" fill="#eeeeee" />
<text transform="translate(1469.50,407.40) scale(0.5970,1)" font-size="13.62" font-weight="bold" fill="#474858" stroke="#474858" stroke-width="0.5" textLength="20.43" lengthAdjust="spacing">ON</text>
<rect x="1029.50" y="432.80" width="41.50" height="17.20" rx="0" fill="#9e89ee" />
<text transform="translate(1030.50,448.00) scale(0.6000,1)" font-size="19.13" font-weight="bold" fill="#474858" stroke="#474858" stroke-width="0.5" textLength="64.98" lengthAdjust="spacing">Y AXIS</text>
<line x1="1076.60" y1="434.50" x2="1076.60" y2="449.50" stroke="#474858" stroke-width="1.3" />
<path d="M1076.6,431.5 L1074.3,436.0 L1078.8999999999999,436.0 Z" fill="#474858" stroke="none" stroke-width="1" />
<path d="M1076.6,452.5 L1074.3,448.0 L1078.8999999999999,448.0 Z" fill="#474858" stroke="none" stroke-width="1" />
<text transform="translate(1020.00,482.20) scale(0.6000,1)" font-size="13.33" font-weight="bold" fill="#474858" stroke="#474858" stroke-width="0.5" textLength="100.86" lengthAdjust="spacing">EXP AMOUNT</text>
<path d="M1026.57,536.02 A29.6,29.6 0 0 1 1028.97,496.87" fill="none" stroke="#4a4b5e" stroke-width="2.9" stroke-linecap="butt"/>
<path d="M1074.15,500.82 A29.6,29.6 0 0 1 1070.83,538.73" fill="none" stroke="#4a4b5e" stroke-width="2.9" stroke-linecap="butt"/>
<circle cx="1049.90" cy="517.80" r="17.70" fill="url(#halo)" />
<circle cx="1049.90" cy="521.30" r="18.10" fill="url(#ksh)" />
<path d="M1036.25,531.45 A19.3,19.3 0 1 1 1063.55,531.45" fill="none" stroke="#a0a0a2" stroke-width="3.2" stroke-linecap="butt"/>
<circle cx="1049.90" cy="517.80" r="13.60" fill="#4a4b5e" />
<line x1="1049.90" y1="504.20" x2="1049.90" y2="509.23" stroke="#f2f2f2" stroke-width="2.3" />
<circle cx="1070.26" cy="497.44" r="5.90" fill="#e59ee0" />
<circle cx="1070.26" cy="497.44" r="4.20" fill="#4a4b5c" />
<circle cx="1029.54" cy="538.16" r="5.90" fill="#e59ee0" />
<circle cx="1029.54" cy="538.16" r="4.20" fill="#4a4b5c" />
<circle cx="1049.90" cy="491.70" r="1.90" fill="#4a4b5e" />
<text transform="translate(1035.10,551.00) scale(0.5750,1)" font-size="10.87" font-weight="bold" fill="#474858" stroke="#474858" stroke-width="0.5" textLength="7.85" lengthAdjust="spacing">R</text>
<text transform="translate(1062.40,551.00) scale(0.6000,1)" font-size="10.87" font-weight="bold" fill="#474858" stroke="#474858" stroke-width="0.5" textLength="8.34" lengthAdjust="spacing">F</text>
<text transform="translate(1024.40,573.20) scale(0.6000,1)" font-size="13.04" font-weight="bold" fill="#474858" stroke="#474858" stroke-width="0.5" textLength="86.15" lengthAdjust="spacing">LFO RANGE</text>
<circle cx="1049.90" cy="600.00" r="17.70" fill="url(#halo)" />
<circle cx="1049.90" cy="603.50" r="18.50" fill="url(#ksh)" />
<path d="M1036.25,613.65 A19.3,19.3 0 1 1 1063.55,613.65" fill="none" stroke="#a0a0a2" stroke-width="3.2" stroke-linecap="butt"/>
<circle cx="1049.90" cy="600.00" r="14.00" fill="#4a4b5e" />
<line x1="1049.90" y1="586.00" x2="1049.90" y2="591.18" stroke="#f2f2f2" stroke-width="2.3" />
<line x1="1044.30" y1="620.00" x2="1049.90" y2="630.04" stroke="#474858" stroke-width="1.4" />
<line x1="1055.50" y1="620.00" x2="1049.90" y2="630.04" stroke="#474858" stroke-width="1.4" />
<line x1="1049.90" y1="630.04" x2="1049.90" y2="644.00" stroke="#474858" stroke-width="1.3" />
<path d="M1043.3000000000002,618 L1046.5,622 L1042.5,622.8 Z" fill="#474858" stroke="none" stroke-width="1" />
<path d="M1056.5,618 L1053.3000000000002,622 L1057.3000000000002,622.8 Z" fill="#474858" stroke="none" stroke-width="1" />
<path d="M1047.4,642.5 L1052.4,642.5 L1049.9,646 Z" fill="#474858" stroke="none" stroke-width="1" />
<circle cx="1049.90" cy="671.00" r="17.70" fill="url(#halo)" />
<circle cx="1049.90" cy="674.50" r="18.50" fill="url(#ksh)" />
<path d="M1036.25,684.65 A19.3,19.3 0 1 1 1063.55,684.65" fill="none" stroke="#a0a0a2" stroke-width="3.2" stroke-linecap="butt"/>
<circle cx="1049.90" cy="671.00" r="14.00" fill="#4a4b5e" />
<line x1="1049.90" y1="657.00" x2="1049.90" y2="662.18" stroke="#f2f2f2" stroke-width="2.3" />
<text transform="translate(1026.40,706.60) scale(0.6000,1)" font-size="13.04" font-weight="bold" fill="#474858" stroke="#474858" stroke-width="0.5" textLength="78.35" lengthAdjust="spacing">EXP MODE</text>
<circle cx="1045.60" cy="737.00" r="3.50" fill="#b0b0b0" />
<circle cx="1045.60" cy="736.50" r="3.30" fill="#c3c3c3" />
<circle cx="1058.50" cy="737.00" r="3.50" fill="#b0b0b0" />
<circle cx="1058.50" cy="736.50" r="3.30" fill="#c3c3c3" />
<circle cx="1038.90" cy="744.50" r="3.50" fill="#b0b0b0" />
<circle cx="1038.90" cy="744.00" r="3.30" fill="#c3c3c3" />
<circle cx="1051.90" cy="744.50" r="3.50" fill="#b0b0b0" />
<circle cx="1051.90" cy="744.00" r="3.30" fill="#c3c3c3" />
<circle cx="1064.50" cy="744.50" r="3.50" fill="#b0b0b0" />
<circle cx="1064.50" cy="744.00" r="3.30" fill="#c3c3c3" />
<circle cx="1032.90" cy="753.00" r="3.50" fill="#b0b0b0" />
<circle cx="1032.90" cy="752.50" r="3.30" fill="#c3c3c3" />
<circle cx="1045.60" cy="753.00" r="3.50" fill="#b0b0b0" />
<circle cx="1045.60" cy="752.50" r="3.30" fill="#c3c3c3" />
<circle cx="1058.50" cy="753.00" r="3.50" fill="#b0b0b0" />
<circle cx="1058.50" cy="752.50" r="3.30" fill="#c3c3c3" />
<circle cx="1071.10" cy="753.00" r="3.50" fill="#b0b0b0" />
<circle cx="1071.10" cy="752.50" r="3.30" fill="#c3c3c3" />
<circle cx="1038.90" cy="760.50" r="3.50" fill="#b0b0b0" />
<circle cx="1038.90" cy="760.00" r="3.30" fill="#c3c3c3" />
<circle cx="1051.90" cy="760.50" r="3.50" fill="#b0b0b0" />
<circle cx="1051.90" cy="760.00" r="3.30" fill="#c3c3c3" />
<circle cx="1064.50" cy="760.50" r="3.50" fill="#b0b0b0" />
<circle cx="1064.50" cy="760.00" r="3.30" fill="#c3c3c3" />
<circle cx="1045.60" cy="768.50" r="3.50" fill="#b0b0b0" />
<circle cx="1045.60" cy="768.00" r="3.30" fill="#c3c3c3" />
<circle cx="1058.50" cy="768.50" r="3.50" fill="#b0b0b0" />
<circle cx="1058.50" cy="768.00" r="3.30" fill="#c3c3c3" />
<rect x="1096.00" y="428.00" width="2.00" height="261.50" rx="0" fill="#a7a7a9" />
<rect x="1102.00" y="428.00" width="2.00" height="261.50" rx="0" fill="#a7a7a9" />
<rect x="1113.00" y="430.00" width="264.40" height="264.40" rx="3" fill="#bdbdbd" />
<rect x="1115.00" y="431.00" width="259.40" height="259.40" rx="2.5" fill="#3a3a40" />
<rect x="1113.00" y="696.00" width="262.00" height="1.80" rx="0" fill="#a9a9ab" />
<rect x="1113.00" y="703.00" width="262.00" height="1.80" rx="0" fill="#a9a9ab" />
<rect x="1113.00" y="712.00" width="264.40" height="80.00" rx="0" fill="#ececec" />
<text transform="translate(1407.00,444.30) scale(0.6000,1)" font-size="12.90" font-weight="bold" fill="#474858" stroke="#474858" stroke-width="0.5" textLength="100.03" lengthAdjust="spacing">EXP AMOUNT</text>
<path d="M1413.67,498.02 A29.6,29.6 0 0 1 1416.07,458.87" fill="none" stroke="#4a4b5e" stroke-width="2.9" stroke-linecap="butt"/>
<path d="M1461.25,462.82 A29.6,29.6 0 0 1 1457.93,500.73" fill="none" stroke="#4a4b5e" stroke-width="2.9" stroke-linecap="butt"/>
<circle cx="1437.00" cy="479.80" r="17.70" fill="url(#halo)" />
<circle cx="1437.00" cy="483.30" r="18.10" fill="url(#ksh)" />
<path d="M1423.35,493.45 A19.3,19.3 0 1 1 1450.65,493.45" fill="none" stroke="#a0a0a2" stroke-width="3.2" stroke-linecap="butt"/>
<path d="M1437.00,460.50 A19.3,19.3 0 0 1 1446.65,463.09" fill="none" stroke="#e59ee0" stroke-width="3.2" stroke-linecap="butt"/>
<circle cx="1437.00" cy="479.80" r="13.60" fill="#4a4b5e" />
<line x1="1443.80" y1="468.02" x2="1441.28" y2="472.38" stroke="#f2f2f2" stroke-width="2.3" />
<circle cx="1457.36" cy="459.44" r="5.90" fill="#e59ee0" />
<circle cx="1457.36" cy="459.44" r="4.20" fill="#4a4b5c" />
<circle cx="1416.64" cy="500.16" r="5.90" fill="#e59ee0" />
<circle cx="1416.64" cy="500.16" r="4.20" fill="#4a4b5c" />
<circle cx="1437.00" cy="453.70" r="1.90" fill="#4a4b5e" />
<text transform="translate(1422.20,513.00) scale(0.5750,1)" font-size="10.87" font-weight="bold" fill="#474858" stroke="#474858" stroke-width="0.5" textLength="7.85" lengthAdjust="spacing">R</text>
<text transform="translate(1449.50,513.00) scale(0.6000,1)" font-size="10.87" font-weight="bold" fill="#474858" stroke="#474858" stroke-width="0.5" textLength="8.34" lengthAdjust="spacing">F</text>
<text transform="translate(1411.40,535.40) scale(0.6000,1)" font-size="13.04" font-weight="bold" fill="#474858" stroke="#474858" stroke-width="0.5" textLength="85.98" lengthAdjust="spacing">LFO RANGE</text>
<circle cx="1437.00" cy="562.00" r="17.70" fill="url(#halo)" />
<circle cx="1437.00" cy="565.50" r="18.50" fill="url(#ksh)" />
<path d="M1423.35,575.65 A19.3,19.3 0 1 1 1450.65,575.65" fill="none" stroke="#a0a0a2" stroke-width="3.2" stroke-linecap="butt"/>
<path d="M1437.00,542.70 A19.3,19.3 0 0 1 1443.60,543.86" fill="none" stroke="#e59ee0" stroke-width="3.2" stroke-linecap="butt"/>
<circle cx="1437.00" cy="562.00" r="14.00" fill="#4a4b5e" />
<line x1="1437.00" y1="548.00" x2="1437.00" y2="553.18" stroke="#f2f2f2" stroke-width="2.3" />
<line x1="1431.40" y1="582.00" x2="1437.00" y2="592.04" stroke="#474858" stroke-width="1.4" />
<line x1="1442.60" y1="582.00" x2="1437.00" y2="592.04" stroke="#474858" stroke-width="1.4" />
<line x1="1437.00" y1="592.04" x2="1437.00" y2="606.00" stroke="#474858" stroke-width="1.3" />
<path d="M1430.4,580 L1433.6,584 L1429.6,584.8 Z" fill="#474858" stroke="none" stroke-width="1" />
<path d="M1443.6,580 L1440.4,584 L1444.4,584.8 Z" fill="#474858" stroke="none" stroke-width="1" />
<path d="M1434.5,604.5 L1439.5,604.5 L1437,608 Z" fill="#474858" stroke="none" stroke-width="1" />
<circle cx="1437.00" cy="633.60" r="17.70" fill="url(#halo)" />
<circle cx="1437.00" cy="637.10" r="18.50" fill="url(#ksh)" />
<path d="M1423.35,647.25 A19.3,19.3 0 1 1 1450.65,647.25" fill="none" stroke="#a0a0a2" stroke-width="3.2" stroke-linecap="butt"/>
<path d="M1437.00,614.30 A19.3,19.3 0 0 1 1443.60,615.46" fill="none" stroke="#e59ee0" stroke-width="3.2" stroke-linecap="butt"/>
<circle cx="1437.00" cy="633.60" r="14.00" fill="#4a4b5e" />
<line x1="1437.00" y1="619.60" x2="1437.00" y2="624.78" stroke="#f2f2f2" stroke-width="2.3" />
<text transform="translate(1413.70,667.80) scale(0.6000,1)" font-size="13.33" font-weight="bold" fill="#474858" stroke="#474858" stroke-width="0.5" textLength="78.35" lengthAdjust="spacing">EXP MODE</text>
<rect x="1415.00" y="692.90" width="42.00" height="16.80" rx="0" fill="#9e89ee" />
<text transform="translate(1416.50,707.60) scale(0.6000,1)" font-size="18.84" font-weight="bold" fill="#474858" stroke="#474858" stroke-width="0.5" textLength="65.03" lengthAdjust="spacing">X AXIS</text>
<line x1="1391.00" y1="701.90" x2="1404.40" y2="701.90" stroke="#474858" stroke-width="1.3" />
<path d="M1388,701.9 L1392.5,699.3 L1392.5,704.5 Z" fill="#474858" stroke="none" stroke-width="1" />
<path d="M1407.4,701.9 L1402.9,699.3 L1402.9,704.5 Z" fill="#474858" stroke="none" stroke-width="1" />
<circle cx="1430.20" cy="737.00" r="3.50" fill="#b0b0b0" />
<circle cx="1430.20" cy="736.50" r="3.30" fill="#c3c3c3" />
<circle cx="1443.10" cy="737.00" r="3.50" fill="#b0b0b0" />
<circle cx="1443.10" cy="736.50" r="3.30" fill="#c3c3c3" />
<circle cx="1423.50" cy="744.50" r="3.50" fill="#b0b0b0" />
<circle cx="1423.50" cy="744.00" r="3.30" fill="#c3c3c3" />
<circle cx="1436.50" cy="744.50" r="3.50" fill="#b0b0b0" />
<circle cx="1436.50" cy="744.00" r="3.30" fill="#c3c3c3" />
<circle cx="1449.10" cy="744.50" r="3.50" fill="#b0b0b0" />
<circle cx="1449.10" cy="744.00" r="3.30" fill="#c3c3c3" />
<circle cx="1417.50" cy="753.00" r="3.50" fill="#b0b0b0" />
<circle cx="1417.50" cy="752.50" r="3.30" fill="#c3c3c3" />
<circle cx="1430.20" cy="753.00" r="3.50" fill="#b0b0b0" />
<circle cx="1430.20" cy="752.50" r="3.30" fill="#c3c3c3" />
<circle cx="1443.10" cy="753.00" r="3.50" fill="#b0b0b0" />
<circle cx="1443.10" cy="752.50" r="3.30" fill="#c3c3c3" />
<circle cx="1455.70" cy="753.00" r="3.50" fill="#b0b0b0" />
<circle cx="1455.70" cy="752.50" r="3.30" fill="#c3c3c3" />
<circle cx="1423.50" cy="760.50" r="3.50" fill="#b0b0b0" />
<circle cx="1423.50" cy="760.00" r="3.30" fill="#c3c3c3" />
<circle cx="1436.50" cy="760.50" r="3.50" fill="#b0b0b0" />
<circle cx="1436.50" cy="760.00" r="3.30" fill="#c3c3c3" />
<circle cx="1449.10" cy="760.50" r="3.50" fill="#b0b0b0" />
<circle cx="1449.10" cy="760.00" r="3.30" fill="#c3c3c3" />
<circle cx="1430.20" cy="768.50" r="3.50" fill="#b0b0b0" />
<circle cx="1430.20" cy="768.00" r="3.30" fill="#c3c3c3" />
<circle cx="1443.10" cy="768.50" r="3.50" fill="#b0b0b0" />
<circle cx="1443.10" cy="768.00" r="3.30" fill="#c3c3c3" />
<rect x="1152.40" y="431.00" width="36.80" height="259.40" rx="0" fill="#4b4c50" fill-opacity="0.45"/>
<rect x="1226.00" y="431.00" width="36.80" height="259.40" rx="0" fill="#4b4c50" fill-opacity="0.45"/>
<rect x="1299.60" y="431.00" width="36.80" height="259.40" rx="0" fill="#4b4c50" fill-opacity="0.45"/>
<line x1="1152.40" y1="431.00" x2="1152.40" y2="690.40" stroke="#5b5580" stroke-width="0.9" />
<line x1="1189.20" y1="431.00" x2="1189.20" y2="690.40" stroke="#5b5580" stroke-width="0.9" />
<line x1="1226.00" y1="431.00" x2="1226.00" y2="690.40" stroke="#5b5580" stroke-width="0.9" />
<line x1="1262.80" y1="431.00" x2="1262.80" y2="690.40" stroke="#5b5580" stroke-width="0.9" />
<line x1="1299.60" y1="431.00" x2="1299.60" y2="690.40" stroke="#5b5580" stroke-width="0.9" />
<line x1="1336.40" y1="431.00" x2="1336.40" y2="690.40" stroke="#5b5580" stroke-width="0.9" />
<line x1="1115.00" y1="440.60" x2="1374.40" y2="440.60" stroke="#5b5580" stroke-width="0.9" />
<line x1="1115.00" y1="454.70" x2="1374.40" y2="454.70" stroke="#5b5580" stroke-width="0.9" />
<line x1="1115.00" y1="468.80" x2="1374.40" y2="468.80" stroke="#5b5580" stroke-width="0.9" />
<line x1="1115.00" y1="482.90" x2="1374.40" y2="482.90" stroke="#5b5580" stroke-width="0.9" />
<line x1="1115.00" y1="497.00" x2="1374.40" y2="497.00" stroke="#5b5580" stroke-width="0.9" />
<line x1="1115.00" y1="511.10" x2="1374.40" y2="511.10" stroke="#5b5580" stroke-width="0.9" />
<line x1="1115.00" y1="525.20" x2="1374.40" y2="525.20" stroke="#5b5580" stroke-width="0.9" />
<line x1="1115.00" y1="539.30" x2="1374.40" y2="539.30" stroke="#5b5580" stroke-width="0.9" />
<line x1="1115.00" y1="553.40" x2="1374.40" y2="553.40" stroke="#5b5580" stroke-width="0.9" />
<line x1="1115.00" y1="567.50" x2="1374.40" y2="567.50" stroke="#5b5580" stroke-width="0.9" />
<line x1="1115.00" y1="581.60" x2="1374.40" y2="581.60" stroke="#5b5580" stroke-width="0.9" />
<line x1="1115.00" y1="595.70" x2="1374.40" y2="595.70" stroke="#5b5580" stroke-width="0.9" />
<line x1="1115.00" y1="609.80" x2="1374.40" y2="609.80" stroke="#5b5580" stroke-width="0.9" />
<line x1="1115.00" y1="623.90" x2="1374.40" y2="623.90" stroke="#5b5580" stroke-width="0.9" />
<line x1="1115.00" y1="638.00" x2="1374.40" y2="638.00" stroke="#5b5580" stroke-width="0.9" />
<line x1="1115.00" y1="652.10" x2="1374.40" y2="652.10" stroke="#5b5580" stroke-width="0.9" />
<line x1="1115.00" y1="666.20" x2="1374.40" y2="666.20" stroke="#5b5580" stroke-width="0.9" />
<line x1="1115.00" y1="680.30" x2="1374.40" y2="680.30" stroke="#5b5580" stroke-width="0.9" />
<path d="M1115.0,440.6 H1146.0 V454.8 H1152.7 V440.6 H1180.0 V454.8 H1188.3 V440.6 H1211.7 V454.8 H1225.0 V440.6 H1245.0 V454.8 H1261.7 V440.6 H1276.7 V454.8 H1298.3 V440.6 H1308.3 V454.8 H1338.3 V440.6 H1340.7 V454.8 H1373.0 V454.8" fill="none" stroke="#9f8cf2" stroke-width="2.2" />
<path d="M1115.0,665.8 H1130.7 V679.7 H1142.4 V672.0 H1152.3 V665.8 H1168.5 V679.7 H1184.6 V672.0 H1189.1 V665.8 H1205.3 V679.7 H1225.1 V665.8 H1244.5 V679.7 H1262.5 V672.0 H1266.5 V665.8 H1279.0 V679.7 H1298.8 V672.0 H1307.0 V665.8 H1316.0 V679.7 H1335.7 V672.0 H1347.4 V665.8 H1353.2 V679.7 H1373.0 V679.7" fill="none" stroke="#9f8cf2" stroke-width="2.2" />
<clipPath id="scr1115"><rect x="1115" y="431" width="259.4000000000001" height="259.4"/></clipPath>
<g clip-path="url(#scr1115)">
<circle cx="1241.30" cy="429.00" r="11.60" fill="#c8c8c8" />
<circle cx="1241.30" cy="429.00" r="8.60" fill="#9f8cf2" />
<circle cx="1241.30" cy="429.00" r="6.20" fill="none" stroke="#eeeeee" stroke-width="1.6"/>
</g>
<rect x="1245.00" y="702.00" width="44.00" height="3.60" rx="0" fill="#d99ad4" />
<text transform="translate(1140.00,732.60) scale(0.6000,1)" font-size="13.33" font-weight="bold" fill="#474858" stroke="#474858" stroke-width="0.5" textLength="74.99" lengthAdjust="spacing">OSC.RESO</text>
<circle cx="1162.60" cy="761.30" r="18.70" fill="url(#halo)" />
<circle cx="1162.60" cy="764.80" r="18.50" fill="url(#ksh)" />
<path d="M1148.25,775.65 A20.3,20.3 0 1 1 1176.95,775.65" fill="none" stroke="#cdcdcf" stroke-width="3.2" stroke-linecap="butt"/>
<path d="M1148.25,775.65 A20.3,20.3 0 0 1 1142.38,763.07" fill="none" stroke="#9e89ee" stroke-width="3" stroke-linecap="butt"/>
<circle cx="1162.60" cy="761.30" r="14.00" fill="#4a4b5e" />
<line x1="1149.91" y1="755.38" x2="1154.61" y2="757.57" stroke="#f2f2f2" stroke-width="2.3" />
<text transform="translate(1220.00,732.60) scale(0.6000,1)" font-size="13.33" font-weight="bold" fill="#474858" stroke="#474858" stroke-width="0.5" textLength="84.18" lengthAdjust="spacing">DRIFT AMT</text>
<circle cx="1245.30" cy="761.30" r="18.70" fill="url(#halo)" />
<circle cx="1245.30" cy="764.80" r="18.50" fill="url(#ksh)" />
<path d="M1230.95,775.65 A20.3,20.3 0 1 1 1259.65,775.65" fill="none" stroke="#cdcdcf" stroke-width="3.2" stroke-linecap="butt"/>
<path d="M1230.95,775.65 A20.3,20.3 0 0 1 1245.30,741.00" fill="none" stroke="#9e89ee" stroke-width="3" stroke-linecap="butt"/>
<circle cx="1245.30" cy="761.30" r="14.00" fill="#4a4b5e" />
<line x1="1245.30" y1="747.30" x2="1245.30" y2="752.48" stroke="#f2f2f2" stroke-width="2.3" />
<line x1="1278.00" y1="761.50" x2="1295.60" y2="761.50" stroke="#474858" stroke-width="1.3" />
<path d="M1275,761.5 L1279.5,758.9 L1279.5,764.1 Z" fill="#474858" stroke="none" stroke-width="1" />
<path d="M1298.6,761.5 L1294.1,758.9 L1294.1,764.1 Z" fill="#474858" stroke="none" stroke-width="1" />
<text transform="translate(1300.50,732.60) scale(0.6000,1)" font-size="13.33" font-weight="bold" fill="#474858" stroke="#474858" stroke-width="0.5" textLength="91.66" lengthAdjust="spacing">DRIFT RATE</text>
<circle cx="1328.00" cy="761.30" r="18.70" fill="url(#halo)" />
<circle cx="1328.00" cy="764.80" r="18.50" fill="url(#ksh)" />
<path d="M1313.65,775.65 A20.3,20.3 0 1 1 1342.35,775.65" fill="none" stroke="#cdcdcf" stroke-width="3.2" stroke-linecap="butt"/>
<circle cx="1328.00" cy="761.30" r="14.00" fill="#4a4b5e" />
<line x1="1318.10" y1="771.20" x2="1321.76" y2="767.54" stroke="#f2f2f2" stroke-width="2.3" />
<rect x="10.00" y="797.00" width="490.00" height="37.70" rx="1.5" fill="#e4e4e4" />
<rect x="505.00" y="797.00" width="490.00" height="37.70" rx="1.5" fill="#e4e4e4" />
<rect x="1000.00" y="797.00" width="490.00" height="37.70" rx="1.5" fill="#e4e4e4" />
<text transform="translate(19.60,823.00) scale(0.5679,1)" font-size="20.29" font-weight="bold" fill="#474858" stroke="#474858" stroke-width="0.5" textLength="120.61" lengthAdjust="spacing">ROOT NOTE</text>
<text transform="translate(152.00,821.00) scale(0.6000,1)" font-size="13.04" font-weight="bold" fill="#474858" stroke="#474858" stroke-width="0.5" textLength="44.01" lengthAdjust="spacing">GLIDE</text>
<path d="M188.75,825.29 A10.5,10.5 0 0 1 183.54,817.12" fill="none" stroke="#4a4b5e" stroke-width="1.8" stroke-linecap="butt"/>
<circle cx="194.00" cy="816.20" r="8.50" fill="#4a4b5e" />
<line x1="189.75" y1="823.56" x2="191.25" y2="820.96" stroke="#f2f2f2" stroke-width="2.3" />
<text transform="translate(218.50,821.00) scale(0.6000,1)" font-size="13.04" font-weight="bold" fill="#474858" stroke="#474858" stroke-width="0.5" textLength="85.81" lengthAdjust="spacing">VIBR. RATE</text>
<path d="M281.91,825.87 A10.5,10.5 0 0 1 278.75,807.96" fill="none" stroke="#4a4b5e" stroke-width="1.8" stroke-linecap="butt"/>
<circle cx="285.50" cy="816.00" r="8.50" fill="#4a4b5e" />
<line x1="281.25" y1="808.64" x2="282.75" y2="811.24" stroke="#f2f2f2" stroke-width="2.3" />
<text transform="translate(308.60,821.00) scale(0.6000,1)" font-size="13.04" font-weight="bold" fill="#474858" stroke="#474858" stroke-width="0.5" textLength="111.18" lengthAdjust="spacing">VIBR. AMOUNT</text>
<circle cx="392.80" cy="816.00" r="8.50" fill="#4a4b5e" />
<line x1="386.79" y1="822.01" x2="388.91" y2="819.89" stroke="#f2f2f2" stroke-width="2.3" />
<text transform="translate(420.50,821.00) scale(0.6000,1)" font-size="13.04" font-weight="bold" fill="#9c9c9e" stroke="#9c9c9e" stroke-width="0.5" textLength="95.15" lengthAdjust="spacing">LAYER SYNC</text>
<rect x="483.00" y="810.50" width="6.00" height="10.00" rx="0" fill="#474858" />
<rect x="484.20" y="811.70" width="3.60" height="4.50" rx="0" fill="#eeeeee" />
<text transform="translate(515.20,823.40) scale(0.5895,1)" font-size="20.29" font-weight="bold" fill="#474858" stroke="#474858" stroke-width="0.5" textLength="137.51" lengthAdjust="spacing">HARMONIZER</text>
<text transform="translate(648.00,821.00) scale(0.6000,1)" font-size="13.04" font-weight="bold" fill="#474858" stroke="#474858" stroke-width="0.5" textLength="57.15" lengthAdjust="spacing">OCTAVE</text>
<text transform="translate(687.70,821.00) scale(0.6000,1)" font-size="13.04" font-weight="bold" fill="#5cc9a2" stroke="#5cc9a2" stroke-width="0.5" textLength="8.18" lengthAdjust="spacing">0</text>
<text transform="translate(712.20,821.00) scale(0.6000,1)" font-size="13.04" font-weight="bold" fill="#474858" stroke="#474858" stroke-width="0.5" textLength="74.31" lengthAdjust="spacing">INTERVAL</text>
<text transform="translate(763.90,821.00) scale(0.6000,1)" font-size="13.04" font-weight="bold" fill="#5cc9a2" stroke="#5cc9a2" stroke-width="0.5" textLength="102.33" lengthAdjust="spacing">+0ST UNISON</text>
<text transform="translate(841.10,821.00) scale(0.6000,1)" font-size="13.04" font-weight="bold" fill="#474858" stroke="#474858" stroke-width="0.5" textLength="78.14" lengthAdjust="spacing">FINE TUNE</text>
<circle cx="907.00" cy="816.00" r="8.50" fill="#4a4b5e" />
<line x1="907.00" y1="807.50" x2="907.00" y2="810.50" stroke="#f2f2f2" stroke-width="2.3" />
<text transform="translate(932.50,821.00) scale(0.6000,1)" font-size="13.04" font-weight="bold" fill="#474858" stroke="#474858" stroke-width="0.5" textLength="42.51" lengthAdjust="spacing">GLIDE</text>
<path d="M968.05,825.09 A10.5,10.5 0 0 1 962.96,817.82" fill="none" stroke="#4a4b5e" stroke-width="1.8" stroke-linecap="butt"/>
<circle cx="973.30" cy="816.00" r="8.50" fill="#4a4b5e" />
<line x1="965.94" y1="820.25" x2="968.54" y2="818.75" stroke="#f2f2f2" stroke-width="2.3" />
<text transform="translate(1010.20,823.40) scale(0.5895,1)" font-size="20.29" font-weight="bold" fill="#474858" stroke="#474858" stroke-width="0.5" textLength="137.51" lengthAdjust="spacing">HARMONIZER</text>
<text transform="translate(1143.00,821.00) scale(0.6000,1)" font-size="13.04" font-weight="bold" fill="#474858" stroke="#474858" stroke-width="0.5" textLength="57.15" lengthAdjust="spacing">OCTAVE</text>
<text transform="translate(1182.70,821.00) scale(0.6000,1)" font-size="13.04" font-weight="bold" fill="#9e89ee" stroke="#9e89ee" stroke-width="0.5" textLength="8.18" lengthAdjust="spacing">0</text>
<text transform="translate(1207.20,821.00) scale(0.6000,1)" font-size="13.04" font-weight="bold" fill="#474858" stroke="#474858" stroke-width="0.5" textLength="74.31" lengthAdjust="spacing">INTERVAL</text>
<text transform="translate(1258.90,821.00) scale(0.6000,1)" font-size="13.04" font-weight="bold" fill="#9e89ee" stroke="#9e89ee" stroke-width="0.5" textLength="102.33" lengthAdjust="spacing">+0ST UNISON</text>
<text transform="translate(1336.10,821.00) scale(0.6000,1)" font-size="13.04" font-weight="bold" fill="#474858" stroke="#474858" stroke-width="0.5" textLength="78.14" lengthAdjust="spacing">FINE TUNE</text>
<circle cx="1402.00" cy="816.00" r="8.50" fill="#4a4b5e" />
<line x1="1402.00" y1="807.50" x2="1402.00" y2="810.50" stroke="#f2f2f2" stroke-width="2.3" />
<text transform="translate(1427.50,821.00) scale(0.6000,1)" font-size="13.04" font-weight="bold" fill="#474858" stroke="#474858" stroke-width="0.5" textLength="42.51" lengthAdjust="spacing">GLIDE</text>
<path d="M1463.05,825.09 A10.5,10.5 0 0 1 1457.96,817.82" fill="none" stroke="#4a4b5e" stroke-width="1.8" stroke-linecap="butt"/>
<circle cx="1468.30" cy="816.00" r="8.50" fill="#4a4b5e" />
<line x1="1460.94" y1="820.25" x2="1463.54" y2="818.75" stroke="#f2f2f2" stroke-width="2.3" />
</svg></body></html>
